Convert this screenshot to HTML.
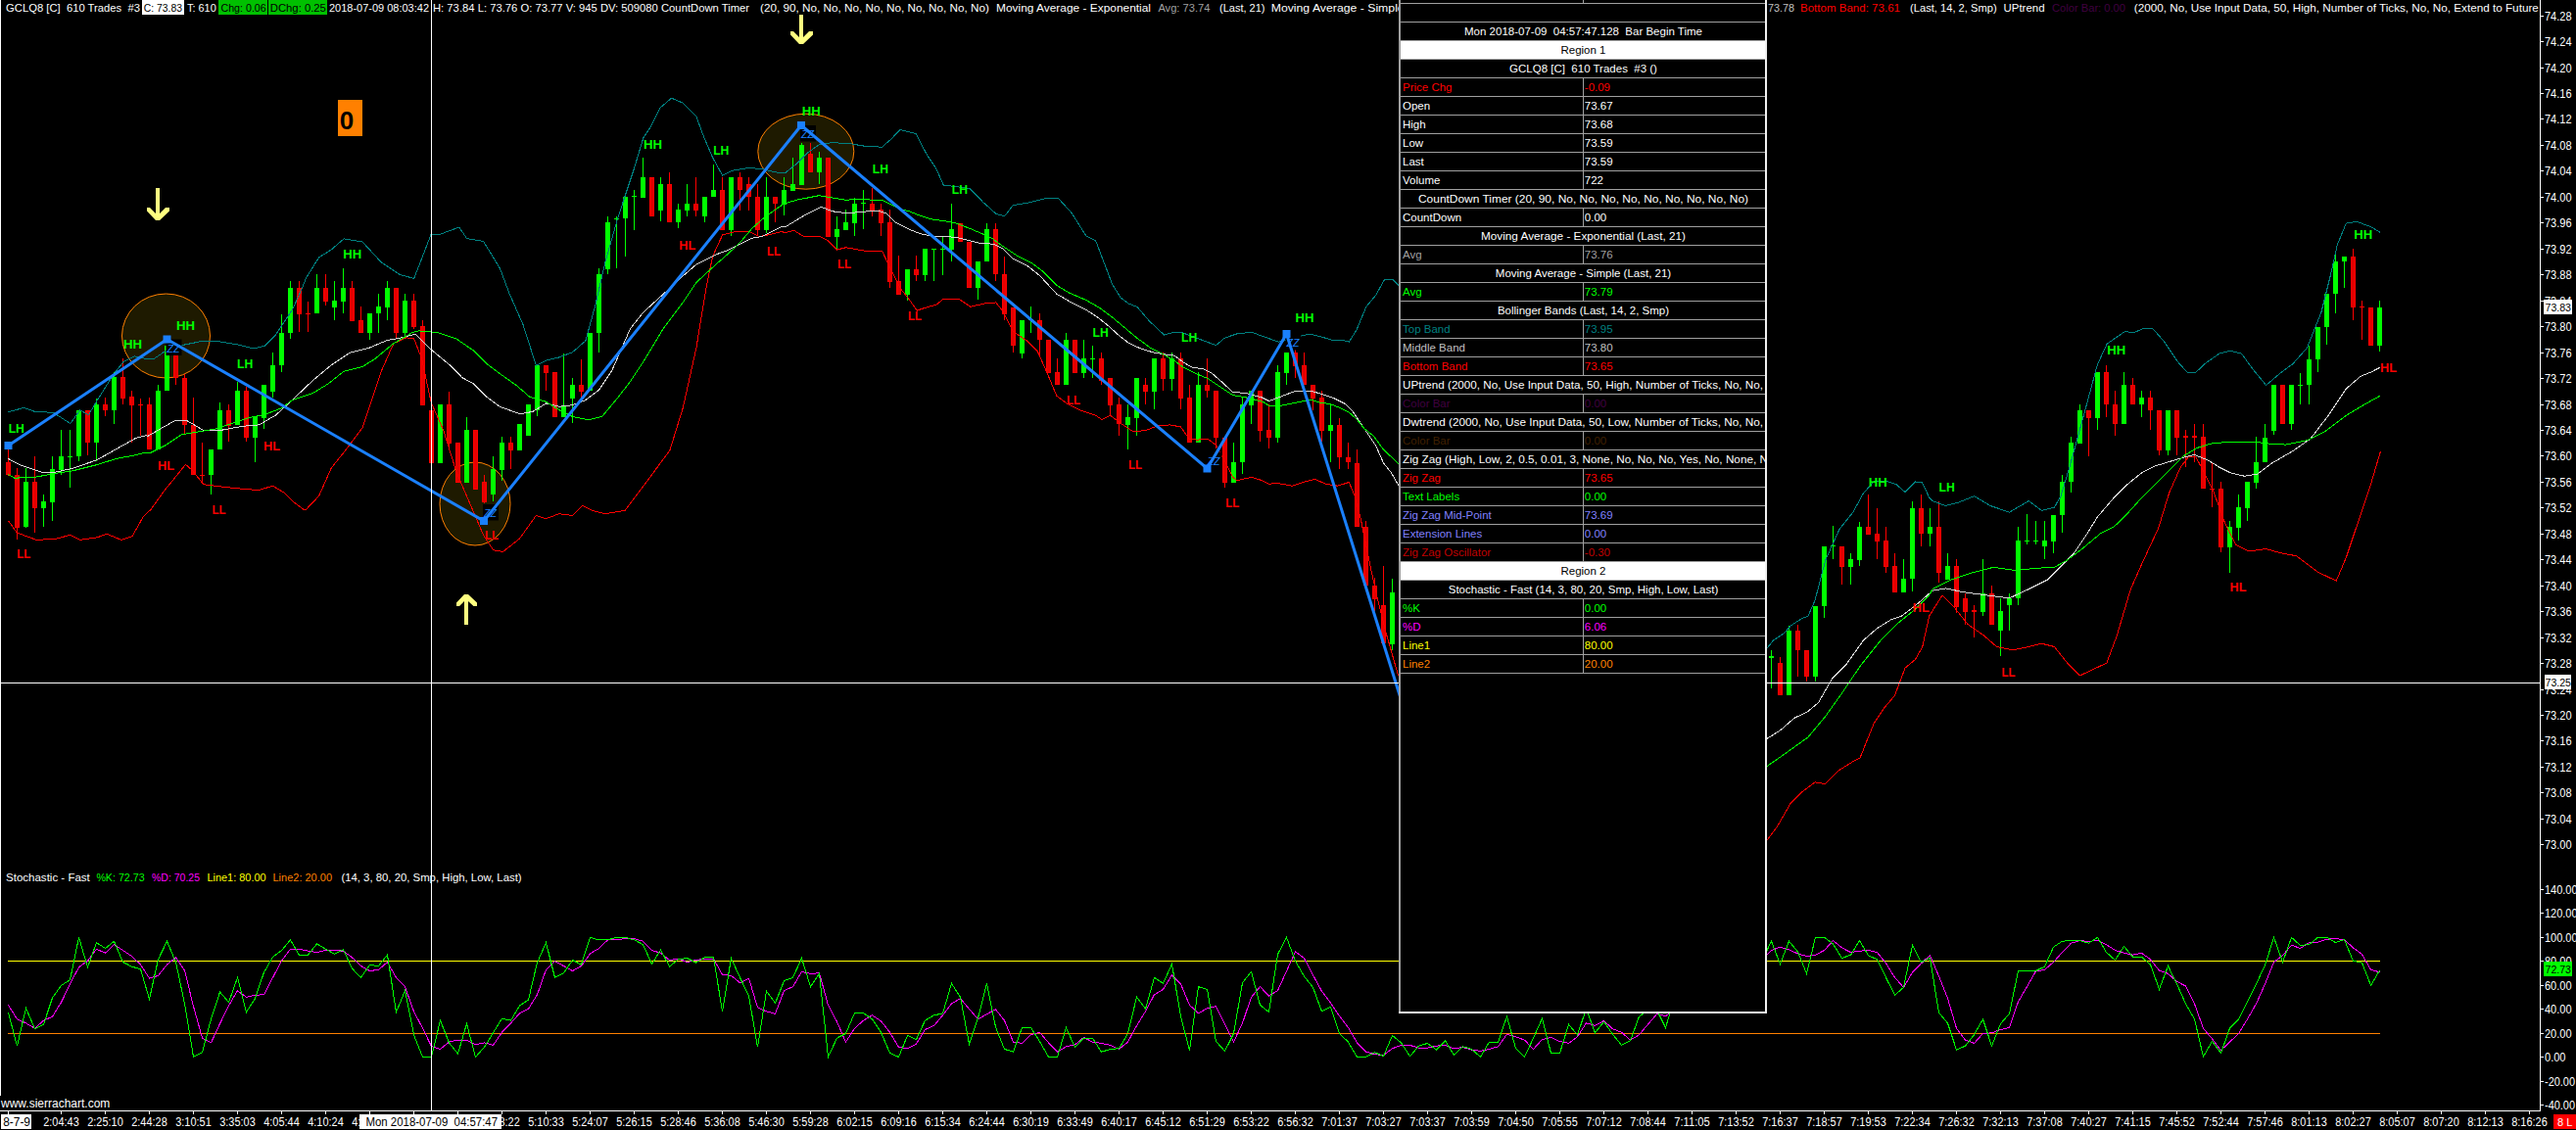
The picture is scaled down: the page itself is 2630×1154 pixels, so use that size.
<!DOCTYPE html><html><head><meta charset="utf-8"><style>html,body{margin:0;padding:0;background:#000;}body{width:2630px;height:1154px;overflow:hidden;position:relative}</style></head><body><svg width="2630" height="1154" viewBox="0 0 2630 1154" style="position:absolute;left:0;top:0">
<ellipse cx="169.5" cy="343" rx="45" ry="43" fill="#1e1a00" stroke="#ff8000" stroke-width="1"/>
<ellipse cx="485" cy="514.5" rx="36" ry="42.5" fill="#1e1a00" stroke="#ff8000" stroke-width="1"/>
<ellipse cx="822.8" cy="154.7" rx="49" ry="38.5" fill="#1e1a00" stroke="#ff8000" stroke-width="1"/>
<g shape-rendering="crispEdges"><rect x="8" y="459" width="1" height="27" fill="#ff0000"/><rect x="6" y="472" width="5" height="13" fill="#ff0000"/><rect x="7" y="473" width="3" height="11" fill="#e80000"/><rect x="17" y="478" width="1" height="73" fill="#ff0000"/><rect x="15" y="485" width="5" height="54" fill="#ff0000"/><rect x="16" y="486" width="3" height="52" fill="#e80000"/><rect x="26" y="478" width="1" height="61" fill="#00ff00"/><rect x="24" y="492" width="5" height="46" fill="#00ff00"/><rect x="35" y="466" width="1" height="78" fill="#ff0000"/><rect x="33" y="492" width="5" height="27" fill="#ff0000"/><rect x="34" y="493" width="3" height="25" fill="#e80000"/><rect x="44" y="505" width="1" height="33" fill="#00ff00"/><rect x="42" y="512" width="5" height="7" fill="#00ff00"/><rect x="53" y="466" width="1" height="66" fill="#00ff00"/><rect x="51" y="479" width="5" height="34" fill="#00ff00"/><rect x="62" y="439" width="1" height="46" fill="#00ff00"/><rect x="60" y="466" width="5" height="14" fill="#00ff00"/><rect x="71" y="439" width="1" height="59" fill="#00ff00"/><rect x="69" y="466" width="5" height="1" fill="#00ff00"/><rect x="80" y="419" width="1" height="52" fill="#00ff00"/><rect x="78" y="419" width="5" height="47" fill="#00ff00"/><rect x="89" y="419" width="1" height="46" fill="#ff0000"/><rect x="87" y="419" width="5" height="33" fill="#ff0000"/><rect x="88" y="420" width="3" height="31" fill="#e80000"/><rect x="98" y="407" width="1" height="64" fill="#00ff00"/><rect x="96" y="413" width="5" height="39" fill="#00ff00"/><rect x="107" y="406" width="1" height="19" fill="#ff0000"/><rect x="105" y="413" width="5" height="6" fill="#ff0000"/><rect x="106" y="414" width="3" height="4" fill="#e80000"/><rect x="116" y="380" width="1" height="53" fill="#00ff00"/><rect x="114" y="385" width="5" height="34" fill="#00ff00"/><rect x="125" y="366" width="1" height="47" fill="#ff0000"/><rect x="123" y="385" width="5" height="22" fill="#ff0000"/><rect x="124" y="386" width="3" height="20" fill="#e80000"/><rect x="134" y="399" width="1" height="53" fill="#ff0000"/><rect x="132" y="405" width="5" height="9" fill="#ff0000"/><rect x="133" y="406" width="3" height="7" fill="#e80000"/><rect x="143" y="407" width="1" height="38" fill="#ff0000"/><rect x="141" y="413" width="5" height="1" fill="#ff0000"/><rect x="152" y="406" width="1" height="53" fill="#ff0000"/><rect x="150" y="413" width="5" height="46" fill="#ff0000"/><rect x="151" y="414" width="3" height="44" fill="#e80000"/><rect x="161" y="393" width="1" height="66" fill="#00ff00"/><rect x="159" y="399" width="5" height="60" fill="#00ff00"/><rect x="170" y="353" width="1" height="46" fill="#00ff00"/><rect x="168" y="353" width="5" height="46" fill="#00ff00"/><rect x="179" y="359" width="1" height="34" fill="#ff0000"/><rect x="177" y="363" width="5" height="23" fill="#ff0000"/><rect x="178" y="364" width="3" height="21" fill="#e80000"/><rect x="188" y="382" width="1" height="62" fill="#ff0000"/><rect x="186" y="386" width="5" height="48" fill="#ff0000"/><rect x="187" y="387" width="3" height="46" fill="#e80000"/><rect x="197" y="406" width="1" height="79" fill="#ff0000"/><rect x="195" y="434" width="5" height="51" fill="#ff0000"/><rect x="196" y="435" width="3" height="49" fill="#e80000"/><rect x="206" y="452" width="1" height="40" fill="#ff0000"/><rect x="204" y="485" width="5" height="1" fill="#ff0000"/><rect x="215" y="459" width="1" height="46" fill="#00ff00"/><rect x="213" y="459" width="5" height="26" fill="#00ff00"/><rect x="224" y="411" width="1" height="48" fill="#00ff00"/><rect x="222" y="419" width="5" height="40" fill="#00ff00"/><rect x="233" y="413" width="1" height="38" fill="#ff0000"/><rect x="231" y="419" width="5" height="16" fill="#ff0000"/><rect x="232" y="420" width="3" height="14" fill="#e80000"/><rect x="242" y="390" width="1" height="44" fill="#00ff00"/><rect x="240" y="399" width="5" height="35" fill="#00ff00"/><rect x="251" y="395" width="1" height="56" fill="#ff0000"/><rect x="249" y="399" width="5" height="48" fill="#ff0000"/><rect x="250" y="400" width="3" height="46" fill="#e80000"/><rect x="260" y="425" width="1" height="47" fill="#00ff00"/><rect x="258" y="425" width="5" height="22" fill="#00ff00"/><rect x="269" y="393" width="1" height="45" fill="#00ff00"/><rect x="267" y="393" width="5" height="34" fill="#00ff00"/><rect x="278" y="360" width="1" height="46" fill="#00ff00"/><rect x="276" y="373" width="5" height="27" fill="#00ff00"/><rect x="287" y="321" width="1" height="59" fill="#00ff00"/><rect x="285" y="340" width="5" height="33" fill="#00ff00"/><rect x="296" y="287" width="1" height="59" fill="#00ff00"/><rect x="294" y="294" width="5" height="46" fill="#00ff00"/><rect x="305" y="287" width="1" height="52" fill="#ff0000"/><rect x="303" y="294" width="5" height="27" fill="#ff0000"/><rect x="304" y="295" width="3" height="25" fill="#e80000"/><rect x="314" y="308" width="1" height="31" fill="#ff0000"/><rect x="312" y="320" width="5" height="1" fill="#ff0000"/><rect x="323" y="280" width="1" height="40" fill="#00ff00"/><rect x="321" y="294" width="5" height="26" fill="#00ff00"/><rect x="332" y="280" width="1" height="32" fill="#ff0000"/><rect x="330" y="294" width="5" height="14" fill="#ff0000"/><rect x="331" y="295" width="3" height="12" fill="#e80000"/><rect x="341" y="287" width="1" height="40" fill="#00ff00"/><rect x="339" y="307" width="5" height="7" fill="#00ff00"/><rect x="350" y="274" width="1" height="46" fill="#00ff00"/><rect x="348" y="294" width="5" height="14" fill="#00ff00"/><rect x="359" y="287" width="1" height="41" fill="#ff0000"/><rect x="357" y="294" width="5" height="34" fill="#ff0000"/><rect x="358" y="295" width="3" height="32" fill="#e80000"/><rect x="368" y="313" width="1" height="27" fill="#ff0000"/><rect x="366" y="327" width="5" height="13" fill="#ff0000"/><rect x="367" y="328" width="3" height="11" fill="#e80000"/><rect x="377" y="320" width="1" height="27" fill="#00ff00"/><rect x="375" y="320" width="5" height="20" fill="#00ff00"/><rect x="386" y="300" width="1" height="40" fill="#00ff00"/><rect x="384" y="313" width="5" height="7" fill="#00ff00"/><rect x="395" y="287" width="1" height="40" fill="#00ff00"/><rect x="393" y="294" width="5" height="20" fill="#00ff00"/><rect x="404" y="294" width="1" height="52" fill="#ff0000"/><rect x="402" y="294" width="5" height="46" fill="#ff0000"/><rect x="403" y="295" width="3" height="44" fill="#e80000"/><rect x="413" y="300" width="1" height="46" fill="#00ff00"/><rect x="411" y="307" width="5" height="33" fill="#00ff00"/><rect x="422" y="300" width="1" height="36" fill="#ff0000"/><rect x="420" y="307" width="5" height="27" fill="#ff0000"/><rect x="421" y="308" width="3" height="25" fill="#e80000"/><rect x="431" y="327" width="1" height="87" fill="#ff0000"/><rect x="429" y="333" width="5" height="81" fill="#ff0000"/><rect x="430" y="334" width="3" height="79" fill="#e80000"/><rect x="440" y="419" width="1" height="54" fill="#ff0000"/><rect x="438" y="419" width="5" height="54" fill="#ff0000"/><rect x="439" y="420" width="3" height="52" fill="#e80000"/><rect x="449" y="413" width="1" height="60" fill="#00ff00"/><rect x="447" y="413" width="5" height="60" fill="#00ff00"/><rect x="458" y="400" width="1" height="58" fill="#ff0000"/><rect x="456" y="413" width="5" height="40" fill="#ff0000"/><rect x="457" y="414" width="3" height="38" fill="#e80000"/><rect x="467" y="452" width="1" height="41" fill="#ff0000"/><rect x="465" y="452" width="5" height="41" fill="#ff0000"/><rect x="466" y="453" width="3" height="39" fill="#e80000"/><rect x="476" y="426" width="1" height="67" fill="#00ff00"/><rect x="474" y="439" width="5" height="54" fill="#00ff00"/><rect x="485" y="439" width="1" height="61" fill="#ff0000"/><rect x="483" y="439" width="5" height="61" fill="#ff0000"/><rect x="484" y="440" width="3" height="59" fill="#e80000"/><rect x="494" y="485" width="1" height="29" fill="#ff0000"/><rect x="492" y="492" width="5" height="21" fill="#ff0000"/><rect x="493" y="493" width="3" height="19" fill="#e80000"/><rect x="503" y="466" width="1" height="46" fill="#00ff00"/><rect x="501" y="479" width="5" height="26" fill="#00ff00"/><rect x="512" y="446" width="1" height="45" fill="#00ff00"/><rect x="510" y="452" width="5" height="28" fill="#00ff00"/><rect x="521" y="446" width="1" height="33" fill="#ff0000"/><rect x="519" y="452" width="5" height="8" fill="#ff0000"/><rect x="520" y="453" width="3" height="6" fill="#e80000"/><rect x="530" y="433" width="1" height="27" fill="#00ff00"/><rect x="528" y="433" width="5" height="27" fill="#00ff00"/><rect x="539" y="413" width="1" height="32" fill="#00ff00"/><rect x="537" y="413" width="5" height="32" fill="#00ff00"/><rect x="548" y="373" width="1" height="52" fill="#00ff00"/><rect x="546" y="373" width="5" height="46" fill="#00ff00"/><rect x="557" y="373" width="1" height="26" fill="#ff0000"/><rect x="555" y="373" width="5" height="8" fill="#ff0000"/><rect x="556" y="374" width="3" height="6" fill="#e80000"/><rect x="566" y="380" width="1" height="46" fill="#ff0000"/><rect x="564" y="380" width="5" height="46" fill="#ff0000"/><rect x="565" y="381" width="3" height="44" fill="#e80000"/><rect x="575" y="361" width="1" height="65" fill="#00ff00"/><rect x="573" y="414" width="5" height="12" fill="#00ff00"/><rect x="584" y="386" width="1" height="46" fill="#00ff00"/><rect x="582" y="393" width="5" height="14" fill="#00ff00"/><rect x="593" y="367" width="1" height="40" fill="#ff0000"/><rect x="591" y="393" width="5" height="7" fill="#ff0000"/><rect x="592" y="394" width="3" height="5" fill="#e80000"/><rect x="602" y="340" width="1" height="59" fill="#00ff00"/><rect x="600" y="340" width="5" height="59" fill="#00ff00"/><rect x="611" y="274" width="1" height="86" fill="#00ff00"/><rect x="609" y="280" width="5" height="60" fill="#00ff00"/><rect x="620" y="221" width="1" height="59" fill="#00ff00"/><rect x="618" y="227" width="5" height="48" fill="#00ff00"/><rect x="629" y="221" width="1" height="53" fill="#00ff00"/><rect x="627" y="223" width="5" height="1" fill="#00ff00"/><rect x="638" y="199" width="1" height="63" fill="#00ff00"/><rect x="636" y="201" width="5" height="22" fill="#00ff00"/><rect x="647" y="194" width="1" height="41" fill="#00ff00"/><rect x="645" y="200" width="5" height="1" fill="#00ff00"/><rect x="656" y="161" width="1" height="41" fill="#00ff00"/><rect x="654" y="181" width="5" height="21" fill="#00ff00"/><rect x="665" y="181" width="1" height="40" fill="#ff0000"/><rect x="663" y="181" width="5" height="40" fill="#ff0000"/><rect x="664" y="182" width="3" height="38" fill="#e80000"/><rect x="674" y="181" width="1" height="45" fill="#00ff00"/><rect x="672" y="188" width="5" height="27" fill="#00ff00"/><rect x="683" y="176" width="1" height="51" fill="#ff0000"/><rect x="681" y="188" width="5" height="39" fill="#ff0000"/><rect x="682" y="189" width="3" height="37" fill="#e80000"/><rect x="692" y="208" width="1" height="25" fill="#00ff00"/><rect x="690" y="214" width="5" height="13" fill="#00ff00"/><rect x="701" y="188" width="1" height="33" fill="#00ff00"/><rect x="699" y="208" width="5" height="7" fill="#00ff00"/><rect x="710" y="181" width="1" height="40" fill="#ff0000"/><rect x="708" y="208" width="5" height="7" fill="#ff0000"/><rect x="709" y="209" width="3" height="5" fill="#e80000"/><rect x="719" y="201" width="1" height="26" fill="#00ff00"/><rect x="717" y="201" width="5" height="20" fill="#00ff00"/><rect x="728" y="168" width="1" height="33" fill="#00ff00"/><rect x="726" y="194" width="5" height="7" fill="#00ff00"/><rect x="737" y="181" width="1" height="54" fill="#ff0000"/><rect x="735" y="194" width="5" height="41" fill="#ff0000"/><rect x="736" y="195" width="3" height="39" fill="#e80000"/><rect x="746" y="181" width="1" height="60" fill="#00ff00"/><rect x="744" y="181" width="5" height="54" fill="#00ff00"/><rect x="755" y="176" width="1" height="39" fill="#ff0000"/><rect x="753" y="181" width="5" height="13" fill="#ff0000"/><rect x="754" y="182" width="3" height="11" fill="#e80000"/><rect x="764" y="181" width="1" height="34" fill="#ff0000"/><rect x="762" y="188" width="5" height="13" fill="#ff0000"/><rect x="763" y="189" width="3" height="11" fill="#e80000"/><rect x="773" y="188" width="1" height="53" fill="#ff0000"/><rect x="771" y="201" width="5" height="34" fill="#ff0000"/><rect x="772" y="202" width="3" height="32" fill="#e80000"/><rect x="782" y="181" width="1" height="57" fill="#00ff00"/><rect x="780" y="201" width="5" height="34" fill="#00ff00"/><rect x="791" y="201" width="1" height="26" fill="#ff0000"/><rect x="789" y="201" width="5" height="7" fill="#ff0000"/><rect x="790" y="202" width="3" height="5" fill="#e80000"/><rect x="800" y="181" width="1" height="39" fill="#00ff00"/><rect x="798" y="194" width="5" height="15" fill="#00ff00"/><rect x="809" y="161" width="1" height="34" fill="#00ff00"/><rect x="807" y="188" width="5" height="7" fill="#00ff00"/><rect x="818" y="146" width="1" height="43" fill="#00ff00"/><rect x="816" y="148" width="5" height="41" fill="#00ff00"/><rect x="827" y="146" width="1" height="30" fill="#ff0000"/><rect x="825" y="157" width="5" height="19" fill="#ff0000"/><rect x="826" y="158" width="3" height="17" fill="#e80000"/><rect x="836" y="155" width="1" height="33" fill="#00ff00"/><rect x="834" y="161" width="5" height="15" fill="#00ff00"/><rect x="845" y="161" width="1" height="81" fill="#ff0000"/><rect x="843" y="161" width="5" height="81" fill="#ff0000"/><rect x="844" y="162" width="3" height="79" fill="#e80000"/><rect x="854" y="221" width="1" height="33" fill="#00ff00"/><rect x="852" y="234" width="5" height="8" fill="#00ff00"/><rect x="863" y="214" width="1" height="21" fill="#00ff00"/><rect x="861" y="227" width="5" height="8" fill="#00ff00"/><rect x="872" y="202" width="1" height="39" fill="#00ff00"/><rect x="870" y="208" width="5" height="20" fill="#00ff00"/><rect x="881" y="194" width="1" height="40" fill="#00ff00"/><rect x="879" y="207" width="5" height="1" fill="#00ff00"/><rect x="890" y="192" width="1" height="29" fill="#ff0000"/><rect x="888" y="208" width="5" height="8" fill="#ff0000"/><rect x="889" y="209" width="3" height="6" fill="#e80000"/><rect x="899" y="208" width="1" height="33" fill="#ff0000"/><rect x="897" y="214" width="5" height="14" fill="#ff0000"/><rect x="898" y="215" width="3" height="12" fill="#e80000"/><rect x="908" y="214" width="1" height="80" fill="#ff0000"/><rect x="906" y="227" width="5" height="61" fill="#ff0000"/><rect x="907" y="228" width="3" height="59" fill="#e80000"/><rect x="917" y="261" width="1" height="40" fill="#ff0000"/><rect x="915" y="287" width="5" height="14" fill="#ff0000"/><rect x="916" y="288" width="3" height="12" fill="#e80000"/><rect x="926" y="275" width="1" height="32" fill="#00ff00"/><rect x="924" y="275" width="5" height="26" fill="#00ff00"/><rect x="935" y="261" width="1" height="26" fill="#ff0000"/><rect x="933" y="275" width="5" height="6" fill="#ff0000"/><rect x="934" y="276" width="3" height="4" fill="#e80000"/><rect x="944" y="254" width="1" height="33" fill="#00ff00"/><rect x="942" y="254" width="5" height="27" fill="#00ff00"/><rect x="953" y="254" width="1" height="33" fill="#00ff00"/><rect x="951" y="254" width="5" height="1" fill="#00ff00"/><rect x="962" y="241" width="1" height="40" fill="#00ff00"/><rect x="960" y="254" width="5" height="1" fill="#00ff00"/><rect x="971" y="208" width="1" height="59" fill="#00ff00"/><rect x="969" y="234" width="5" height="21" fill="#00ff00"/><rect x="980" y="228" width="1" height="19" fill="#ff0000"/><rect x="978" y="228" width="5" height="19" fill="#ff0000"/><rect x="979" y="229" width="3" height="17" fill="#e80000"/><rect x="989" y="247" width="1" height="47" fill="#ff0000"/><rect x="987" y="247" width="5" height="47" fill="#ff0000"/><rect x="988" y="248" width="3" height="45" fill="#e80000"/><rect x="998" y="267" width="1" height="39" fill="#00ff00"/><rect x="996" y="267" width="5" height="27" fill="#00ff00"/><rect x="1007" y="228" width="1" height="39" fill="#00ff00"/><rect x="1005" y="234" width="5" height="33" fill="#00ff00"/><rect x="1016" y="228" width="1" height="59" fill="#ff0000"/><rect x="1014" y="234" width="5" height="46" fill="#ff0000"/><rect x="1015" y="235" width="3" height="44" fill="#e80000"/><rect x="1025" y="262" width="1" height="65" fill="#ff0000"/><rect x="1023" y="280" width="5" height="41" fill="#ff0000"/><rect x="1024" y="281" width="3" height="39" fill="#e80000"/><rect x="1034" y="314" width="1" height="46" fill="#ff0000"/><rect x="1032" y="314" width="5" height="39" fill="#ff0000"/><rect x="1033" y="315" width="3" height="37" fill="#e80000"/><rect x="1043" y="327" width="1" height="39" fill="#00ff00"/><rect x="1041" y="327" width="5" height="34" fill="#00ff00"/><rect x="1052" y="313" width="1" height="27" fill="#00ff00"/><rect x="1050" y="326" width="5" height="1" fill="#00ff00"/><rect x="1061" y="320" width="1" height="45" fill="#ff0000"/><rect x="1059" y="327" width="5" height="20" fill="#ff0000"/><rect x="1060" y="328" width="3" height="18" fill="#e80000"/><rect x="1070" y="347" width="1" height="34" fill="#ff0000"/><rect x="1068" y="347" width="5" height="34" fill="#ff0000"/><rect x="1069" y="348" width="3" height="32" fill="#e80000"/><rect x="1079" y="366" width="1" height="27" fill="#ff0000"/><rect x="1077" y="380" width="5" height="13" fill="#ff0000"/><rect x="1078" y="381" width="3" height="11" fill="#e80000"/><rect x="1088" y="340" width="1" height="53" fill="#00ff00"/><rect x="1086" y="347" width="5" height="46" fill="#00ff00"/><rect x="1097" y="347" width="1" height="34" fill="#ff0000"/><rect x="1095" y="347" width="5" height="34" fill="#ff0000"/><rect x="1096" y="348" width="3" height="32" fill="#e80000"/><rect x="1106" y="347" width="1" height="39" fill="#00ff00"/><rect x="1104" y="366" width="5" height="15" fill="#00ff00"/><rect x="1115" y="353" width="1" height="33" fill="#00ff00"/><rect x="1113" y="366" width="5" height="1" fill="#00ff00"/><rect x="1124" y="360" width="1" height="33" fill="#ff0000"/><rect x="1122" y="366" width="5" height="23" fill="#ff0000"/><rect x="1123" y="367" width="3" height="21" fill="#e80000"/><rect x="1133" y="386" width="1" height="38" fill="#ff0000"/><rect x="1131" y="386" width="5" height="28" fill="#ff0000"/><rect x="1132" y="387" width="3" height="26" fill="#e80000"/><rect x="1142" y="406" width="1" height="39" fill="#ff0000"/><rect x="1140" y="413" width="5" height="20" fill="#ff0000"/><rect x="1141" y="414" width="3" height="18" fill="#e80000"/><rect x="1151" y="413" width="1" height="46" fill="#00ff00"/><rect x="1149" y="426" width="5" height="8" fill="#00ff00"/><rect x="1160" y="386" width="1" height="59" fill="#00ff00"/><rect x="1158" y="386" width="5" height="41" fill="#00ff00"/><rect x="1169" y="386" width="1" height="27" fill="#ff0000"/><rect x="1167" y="393" width="5" height="7" fill="#ff0000"/><rect x="1168" y="394" width="3" height="5" fill="#e80000"/><rect x="1178" y="366" width="1" height="52" fill="#00ff00"/><rect x="1176" y="366" width="5" height="34" fill="#00ff00"/><rect x="1187" y="360" width="1" height="39" fill="#ff0000"/><rect x="1185" y="366" width="5" height="21" fill="#ff0000"/><rect x="1186" y="367" width="3" height="19" fill="#e80000"/><rect x="1196" y="360" width="1" height="39" fill="#00ff00"/><rect x="1194" y="366" width="5" height="21" fill="#00ff00"/><rect x="1205" y="360" width="1" height="58" fill="#ff0000"/><rect x="1203" y="366" width="5" height="41" fill="#ff0000"/><rect x="1204" y="367" width="3" height="39" fill="#e80000"/><rect x="1214" y="393" width="1" height="59" fill="#ff0000"/><rect x="1212" y="406" width="5" height="46" fill="#ff0000"/><rect x="1213" y="407" width="3" height="44" fill="#e80000"/><rect x="1223" y="380" width="1" height="72" fill="#00ff00"/><rect x="1221" y="393" width="5" height="59" fill="#00ff00"/><rect x="1232" y="366" width="1" height="40" fill="#ff0000"/><rect x="1230" y="393" width="5" height="6" fill="#ff0000"/><rect x="1231" y="394" width="3" height="4" fill="#e80000"/><rect x="1241" y="399" width="1" height="59" fill="#ff0000"/><rect x="1239" y="399" width="5" height="48" fill="#ff0000"/><rect x="1240" y="400" width="3" height="46" fill="#e80000"/><rect x="1250" y="447" width="1" height="51" fill="#ff0000"/><rect x="1248" y="447" width="5" height="46" fill="#ff0000"/><rect x="1249" y="448" width="3" height="44" fill="#e80000"/><rect x="1259" y="452" width="1" height="41" fill="#00ff00"/><rect x="1257" y="472" width="5" height="21" fill="#00ff00"/><rect x="1268" y="406" width="1" height="78" fill="#00ff00"/><rect x="1266" y="413" width="5" height="59" fill="#00ff00"/><rect x="1277" y="399" width="1" height="34" fill="#00ff00"/><rect x="1275" y="399" width="5" height="15" fill="#00ff00"/><rect x="1286" y="399" width="1" height="52" fill="#ff0000"/><rect x="1284" y="399" width="5" height="41" fill="#ff0000"/><rect x="1285" y="400" width="3" height="39" fill="#e80000"/><rect x="1295" y="413" width="1" height="45" fill="#ff0000"/><rect x="1293" y="439" width="5" height="8" fill="#ff0000"/><rect x="1294" y="440" width="3" height="6" fill="#e80000"/><rect x="1304" y="373" width="1" height="79" fill="#00ff00"/><rect x="1302" y="380" width="5" height="67" fill="#00ff00"/><rect x="1313" y="360" width="1" height="33" fill="#00ff00"/><rect x="1311" y="360" width="5" height="21" fill="#00ff00"/><rect x="1322" y="357" width="1" height="29" fill="#ff0000"/><rect x="1320" y="360" width="5" height="14" fill="#ff0000"/><rect x="1321" y="361" width="3" height="12" fill="#e80000"/><rect x="1331" y="360" width="1" height="33" fill="#ff0000"/><rect x="1329" y="373" width="5" height="20" fill="#ff0000"/><rect x="1330" y="374" width="3" height="18" fill="#e80000"/><rect x="1340" y="393" width="1" height="26" fill="#ff0000"/><rect x="1338" y="393" width="5" height="14" fill="#ff0000"/><rect x="1339" y="394" width="3" height="12" fill="#e80000"/><rect x="1349" y="399" width="1" height="52" fill="#ff0000"/><rect x="1347" y="406" width="5" height="34" fill="#ff0000"/><rect x="1348" y="407" width="3" height="32" fill="#e80000"/><rect x="1358" y="412" width="1" height="60" fill="#00ff00"/><rect x="1356" y="434" width="5" height="6" fill="#00ff00"/><rect x="1367" y="427" width="1" height="52" fill="#ff0000"/><rect x="1365" y="434" width="5" height="33" fill="#ff0000"/><rect x="1366" y="435" width="3" height="31" fill="#e80000"/><rect x="1376" y="452" width="1" height="27" fill="#ff0000"/><rect x="1374" y="467" width="5" height="5" fill="#ff0000"/><rect x="1375" y="468" width="3" height="3" fill="#e80000"/><rect x="1385" y="459" width="1" height="79" fill="#ff0000"/><rect x="1383" y="473" width="5" height="65" fill="#ff0000"/><rect x="1384" y="474" width="3" height="63" fill="#e80000"/><rect x="1394" y="532" width="1" height="66" fill="#ff0000"/><rect x="1392" y="538" width="5" height="60" fill="#ff0000"/><rect x="1393" y="539" width="3" height="58" fill="#e80000"/><rect x="1403" y="590" width="1" height="34" fill="#ff0000"/><rect x="1401" y="598" width="5" height="14" fill="#ff0000"/><rect x="1402" y="599" width="3" height="12" fill="#e80000"/><rect x="1412" y="578" width="1" height="79" fill="#ff0000"/><rect x="1410" y="618" width="5" height="39" fill="#ff0000"/><rect x="1411" y="619" width="3" height="37" fill="#e80000"/><rect x="1421" y="591" width="1" height="73" fill="#00ff00"/><rect x="1419" y="605" width="5" height="53" fill="#00ff00"/><rect x="1808" y="664" width="1" height="39" fill="#00ff00"/><rect x="1806" y="670" width="5" height="2" fill="#00ff00"/><rect x="1817" y="671" width="1" height="39" fill="#ff0000"/><rect x="1815" y="677" width="5" height="33" fill="#ff0000"/><rect x="1816" y="678" width="3" height="31" fill="#e80000"/><rect x="1826" y="639" width="1" height="71" fill="#00ff00"/><rect x="1824" y="644" width="5" height="66" fill="#00ff00"/><rect x="1835" y="638" width="1" height="53" fill="#ff0000"/><rect x="1833" y="644" width="5" height="20" fill="#ff0000"/><rect x="1834" y="645" width="3" height="18" fill="#e80000"/><rect x="1844" y="664" width="1" height="32" fill="#ff0000"/><rect x="1842" y="664" width="5" height="27" fill="#ff0000"/><rect x="1843" y="665" width="3" height="25" fill="#e80000"/><rect x="1853" y="619" width="1" height="77" fill="#00ff00"/><rect x="1851" y="619" width="5" height="72" fill="#00ff00"/><rect x="1862" y="558" width="1" height="73" fill="#00ff00"/><rect x="1860" y="558" width="5" height="61" fill="#00ff00"/><rect x="1871" y="537" width="1" height="34" fill="#00ff00"/><rect x="1869" y="557" width="5" height="1" fill="#00ff00"/><rect x="1880" y="558" width="1" height="39" fill="#ff0000"/><rect x="1878" y="558" width="5" height="21" fill="#ff0000"/><rect x="1879" y="559" width="3" height="19" fill="#e80000"/><rect x="1889" y="565" width="1" height="32" fill="#00ff00"/><rect x="1887" y="571" width="5" height="8" fill="#00ff00"/><rect x="1898" y="533" width="1" height="45" fill="#00ff00"/><rect x="1896" y="538" width="5" height="34" fill="#00ff00"/><rect x="1907" y="505" width="1" height="41" fill="#ff0000"/><rect x="1905" y="538" width="5" height="8" fill="#ff0000"/><rect x="1906" y="539" width="3" height="6" fill="#e80000"/><rect x="1916" y="519" width="1" height="52" fill="#ff0000"/><rect x="1914" y="545" width="5" height="8" fill="#ff0000"/><rect x="1915" y="546" width="3" height="6" fill="#e80000"/><rect x="1925" y="538" width="1" height="47" fill="#ff0000"/><rect x="1923" y="552" width="5" height="27" fill="#ff0000"/><rect x="1924" y="553" width="3" height="25" fill="#e80000"/><rect x="1934" y="565" width="1" height="40" fill="#ff0000"/><rect x="1932" y="578" width="5" height="27" fill="#ff0000"/><rect x="1933" y="579" width="3" height="25" fill="#e80000"/><rect x="1943" y="571" width="1" height="34" fill="#00ff00"/><rect x="1941" y="591" width="5" height="14" fill="#00ff00"/><rect x="1952" y="512" width="1" height="92" fill="#00ff00"/><rect x="1950" y="519" width="5" height="72" fill="#00ff00"/><rect x="1961" y="505" width="1" height="53" fill="#ff0000"/><rect x="1959" y="519" width="5" height="26" fill="#ff0000"/><rect x="1960" y="520" width="3" height="24" fill="#e80000"/><rect x="1970" y="519" width="1" height="39" fill="#00ff00"/><rect x="1968" y="538" width="5" height="7" fill="#00ff00"/><rect x="1979" y="512" width="1" height="83" fill="#ff0000"/><rect x="1977" y="538" width="5" height="47" fill="#ff0000"/><rect x="1978" y="539" width="3" height="45" fill="#e80000"/><rect x="1988" y="565" width="1" height="27" fill="#00ff00"/><rect x="1986" y="578" width="5" height="14" fill="#00ff00"/><rect x="1997" y="571" width="1" height="55" fill="#ff0000"/><rect x="1995" y="578" width="5" height="42" fill="#ff0000"/><rect x="1996" y="579" width="3" height="40" fill="#e80000"/><rect x="2006" y="606" width="1" height="32" fill="#ff0000"/><rect x="2004" y="611" width="5" height="14" fill="#ff0000"/><rect x="2005" y="612" width="3" height="12" fill="#e80000"/><rect x="2015" y="618" width="1" height="33" fill="#ff0000"/><rect x="2013" y="623" width="5" height="2" fill="#ff0000"/><rect x="2024" y="571" width="1" height="58" fill="#00ff00"/><rect x="2022" y="606" width="5" height="19" fill="#00ff00"/><rect x="2033" y="598" width="1" height="40" fill="#ff0000"/><rect x="2031" y="606" width="5" height="32" fill="#ff0000"/><rect x="2032" y="607" width="3" height="30" fill="#e80000"/><rect x="2042" y="611" width="1" height="59" fill="#00ff00"/><rect x="2040" y="624" width="5" height="20" fill="#00ff00"/><rect x="2051" y="606" width="1" height="38" fill="#00ff00"/><rect x="2049" y="611" width="5" height="7" fill="#00ff00"/><rect x="2060" y="538" width="1" height="80" fill="#00ff00"/><rect x="2058" y="552" width="5" height="59" fill="#00ff00"/><rect x="2069" y="525" width="1" height="31" fill="#00ff00"/><rect x="2067" y="552" width="5" height="1" fill="#00ff00"/><rect x="2078" y="532" width="1" height="24" fill="#00ff00"/><rect x="2076" y="552" width="5" height="1" fill="#00ff00"/><rect x="2087" y="532" width="1" height="39" fill="#00ff00"/><rect x="2085" y="552" width="5" height="6" fill="#00ff00"/><rect x="2096" y="526" width="1" height="39" fill="#00ff00"/><rect x="2094" y="526" width="5" height="27" fill="#00ff00"/><rect x="2105" y="485" width="1" height="59" fill="#00ff00"/><rect x="2103" y="492" width="5" height="34" fill="#00ff00"/><rect x="2114" y="446" width="1" height="57" fill="#00ff00"/><rect x="2112" y="452" width="5" height="40" fill="#00ff00"/><rect x="2123" y="413" width="1" height="40" fill="#00ff00"/><rect x="2121" y="419" width="5" height="34" fill="#00ff00"/><rect x="2132" y="419" width="1" height="47" fill="#ff0000"/><rect x="2130" y="419" width="5" height="8" fill="#ff0000"/><rect x="2131" y="420" width="3" height="6" fill="#e80000"/><rect x="2141" y="380" width="1" height="59" fill="#00ff00"/><rect x="2139" y="380" width="5" height="47" fill="#00ff00"/><rect x="2150" y="373" width="1" height="53" fill="#ff0000"/><rect x="2148" y="380" width="5" height="33" fill="#ff0000"/><rect x="2149" y="381" width="3" height="31" fill="#e80000"/><rect x="2159" y="399" width="1" height="46" fill="#ff0000"/><rect x="2157" y="413" width="5" height="20" fill="#ff0000"/><rect x="2158" y="414" width="3" height="18" fill="#e80000"/><rect x="2168" y="380" width="1" height="53" fill="#00ff00"/><rect x="2166" y="393" width="5" height="40" fill="#00ff00"/><rect x="2177" y="386" width="1" height="27" fill="#ff0000"/><rect x="2175" y="393" width="5" height="20" fill="#ff0000"/><rect x="2176" y="394" width="3" height="18" fill="#e80000"/><rect x="2186" y="399" width="1" height="27" fill="#00ff00"/><rect x="2184" y="406" width="5" height="7" fill="#00ff00"/><rect x="2195" y="399" width="1" height="40" fill="#ff0000"/><rect x="2193" y="406" width="5" height="13" fill="#ff0000"/><rect x="2194" y="407" width="3" height="11" fill="#e80000"/><rect x="2204" y="419" width="1" height="46" fill="#ff0000"/><rect x="2202" y="419" width="5" height="41" fill="#ff0000"/><rect x="2203" y="420" width="3" height="39" fill="#e80000"/><rect x="2213" y="419" width="1" height="46" fill="#00ff00"/><rect x="2211" y="419" width="5" height="41" fill="#00ff00"/><rect x="2222" y="419" width="1" height="46" fill="#ff0000"/><rect x="2220" y="419" width="5" height="28" fill="#ff0000"/><rect x="2221" y="420" width="3" height="26" fill="#e80000"/><rect x="2231" y="439" width="1" height="38" fill="#ff0000"/><rect x="2229" y="445" width="5" height="2" fill="#ff0000"/><rect x="2240" y="433" width="1" height="39" fill="#ff0000"/><rect x="2238" y="445" width="5" height="2" fill="#ff0000"/><rect x="2249" y="433" width="1" height="66" fill="#ff0000"/><rect x="2247" y="446" width="5" height="53" fill="#ff0000"/><rect x="2248" y="447" width="3" height="51" fill="#e80000"/><rect x="2258" y="472" width="1" height="46" fill="#ff0000"/><rect x="2256" y="499" width="5" height="1" fill="#ff0000"/><rect x="2267" y="492" width="1" height="72" fill="#ff0000"/><rect x="2265" y="499" width="5" height="60" fill="#ff0000"/><rect x="2266" y="500" width="3" height="58" fill="#e80000"/><rect x="2276" y="532" width="1" height="53" fill="#00ff00"/><rect x="2274" y="538" width="5" height="21" fill="#00ff00"/><rect x="2285" y="505" width="1" height="47" fill="#00ff00"/><rect x="2283" y="518" width="5" height="21" fill="#00ff00"/><rect x="2294" y="492" width="1" height="40" fill="#00ff00"/><rect x="2292" y="492" width="5" height="27" fill="#00ff00"/><rect x="2303" y="446" width="1" height="53" fill="#00ff00"/><rect x="2301" y="472" width="5" height="21" fill="#00ff00"/><rect x="2312" y="433" width="1" height="39" fill="#00ff00"/><rect x="2310" y="447" width="5" height="25" fill="#00ff00"/><rect x="2321" y="393" width="1" height="51" fill="#00ff00"/><rect x="2319" y="393" width="5" height="47" fill="#00ff00"/><rect x="2330" y="393" width="1" height="40" fill="#ff0000"/><rect x="2328" y="393" width="5" height="40" fill="#ff0000"/><rect x="2329" y="394" width="3" height="38" fill="#e80000"/><rect x="2339" y="393" width="1" height="46" fill="#00ff00"/><rect x="2337" y="393" width="5" height="40" fill="#00ff00"/><rect x="2348" y="381" width="1" height="32" fill="#00ff00"/><rect x="2346" y="393" width="5" height="1" fill="#00ff00"/><rect x="2357" y="353" width="1" height="60" fill="#00ff00"/><rect x="2355" y="367" width="5" height="26" fill="#00ff00"/><rect x="2366" y="334" width="1" height="46" fill="#00ff00"/><rect x="2364" y="334" width="5" height="33" fill="#00ff00"/><rect x="2375" y="300" width="1" height="52" fill="#00ff00"/><rect x="2373" y="300" width="5" height="34" fill="#00ff00"/><rect x="2384" y="256" width="1" height="64" fill="#00ff00"/><rect x="2382" y="267" width="5" height="33" fill="#00ff00"/><rect x="2393" y="262" width="1" height="32" fill="#00ff00"/><rect x="2391" y="262" width="5" height="5" fill="#00ff00"/><rect x="2402" y="254" width="1" height="73" fill="#ff0000"/><rect x="2400" y="262" width="5" height="52" fill="#ff0000"/><rect x="2401" y="263" width="3" height="50" fill="#e80000"/><rect x="2411" y="307" width="1" height="40" fill="#ff0000"/><rect x="2409" y="313" width="5" height="1" fill="#ff0000"/><rect x="2420" y="314" width="1" height="39" fill="#ff0000"/><rect x="2418" y="314" width="5" height="39" fill="#ff0000"/><rect x="2419" y="315" width="3" height="37" fill="#e80000"/><rect x="2429" y="307" width="1" height="52" fill="#00ff00"/><rect x="2427" y="314" width="5" height="39" fill="#00ff00"/></g>
<polyline points="8.4,531.6 17.3,544.0 37.2,551.4 57.0,550.2 71.8,546.4 81.7,551.4 99.1,548.9 109.0,545.2 123.8,551.4 135.0,547.7 146.1,527.9 154.2,520.2 168.3,500.4 189.5,474.4 196.6,480.6 207.9,494.7 230.6,497.6 253.2,499.8 264.5,500.4 278.7,496.2 290.0,503.2 298.5,511.7 309.8,520.2 312.7,520.1 325.5,506.7 338.2,478.0 351.0,462.1 370.1,436.6 379.6,408.0 389.2,379.3 401.9,350.6 414.7,344.9 422.7,345.8 430.6,366.5 440.2,411.1 452.9,439.8 465.7,481.2 483.5,523.0 493.6,546.6 503.6,561.7 513.7,563.4 530.6,549.9 547.4,526.4 557.5,529.7 570.9,524.7 584.4,526.4 594.5,516.3 604.6,521.3 618.0,524.7 638.2,521.3 683.8,460.2 697.3,416.5 710.8,355.9 720.8,295.3 727.6,261.7 737.7,239.8 751.1,236.5 764.6,236.5 774.7,241.5 784.8,239.8 798.2,236.5 801.5,237.7 810.7,235.4 819.9,241.1 836.0,241.1 845.2,245.7 854.5,255.0 863.7,252.7 882.1,256.1 900.5,256.1 909.7,275.7 918.9,294.1 928.1,305.6 936.2,317.1 946.5,313.7 955.7,311.4 962.4,305.9 979.8,305.9 990.9,313.3 1004.5,310.1 1016.9,308.9 1024.4,318.8 1034.3,338.6 1049.2,348.5 1059.1,358.4 1069.0,380.8 1078.9,404.3 1088.9,411.8 1103.7,419.2 1118.6,424.2 1124.9,428.4 1133.3,424.2 1144.0,432.2 1156.7,440.7 1169.4,439.6 1182.2,434.8 1194.9,433.9 1205.5,436.0 1214.0,448.1 1222.5,449.2 1233.1,448.1 1241.6,454.5 1250.1,470.4 1258.6,487.4 1262.8,490.6 1277.7,487.4 1287.8,490.4 1295.6,494.3 1303.4,493.3 1319.0,496.2 1330.7,492.4 1342.3,489.4 1354.0,494.3 1365.7,496.2 1377.4,492.4 1383.1,506.5 1389.5,531.0 1398.0,573.4 1406.4,611.7 1414.9,645.6 1423.4,675.4 1427.7,690.2" fill="none" stroke="#ff0000" stroke-width="1" shape-rendering="crispEdges"/>
<polyline points="1803.5,859.0 1814.1,844.8 1828.3,820.1 1838.9,809.5 1853.0,798.9 1863.6,800.6 1877.8,786.5 1891.9,777.6 1899.0,774.1 1913.2,738.7 1923.8,722.8 1934.4,710.5 1945.0,682.2 1955.6,673.3 1962.7,660.9 1969.7,629.1 1982.9,608.1 1996.0,621.2 2009.1,637.6 2025.4,649.0 2038.5,660.5 2054.9,663.8 2071.3,660.5 2084.3,657.2 2097.4,660.5 2110.5,676.9 2123.6,689.9 2150.9,677.0 2161.1,649.8 2175.3,601.7 2186.6,576.2 2203.6,539.5 2214.9,502.7 2226.2,477.2 2234.7,466.4 2241.8,466.4 2248.9,480.0 2260.2,502.7 2271.5,533.8 2282.8,556.4 2294.2,562.1 2300.9,562.3 2313.6,560.5 2326.3,564.2 2344.5,567.8 2366.3,584.1 2385.2,593.2 2395.3,569.6 2409.9,526.0 2420.8,493.3 2430.6,460.6" fill="none" stroke="#ff0000" stroke-width="1" shape-rendering="crispEdges"/>
<polyline points="8.4,420.6 24.8,416.4 34.7,420.1 54.5,421.4 71.8,432.5 81.7,418.9 90.4,423.8 99.1,409.0 116.4,381.7 126.3,369.3 137.5,363.9 148.6,366.4 157.0,366.5 168.3,358.9 182.5,353.2 196.6,350.4 207.9,348.1 224.9,349.0 241.9,351.8 258.9,356.0 270.2,353.2 281.5,341.9 298.5,316.4 309.8,290.9 312.7,283.7 325.5,263.0 338.2,255.0 351.0,243.9 370.1,247.1 389.2,267.8 408.3,280.5 422.7,284.4 440.2,239.1 449.7,239.1 468.8,232.1 476.7,243.7 493.6,246.4 510.4,274.0 520.5,300.9 533.9,331.2 547.4,373.3 557.5,368.2 570.9,364.9 584.4,359.8 597.9,348.0 608.0,311.0 618.0,267.3 631.5,220.2 638.2,200.0 646.8,174.2 656.9,140.6 663.6,130.5 673.7,110.3 685.5,100.2 697.3,105.2 710.8,118.7 717.5,137.2 727.6,160.8 737.7,179.3 747.8,174.2 764.6,171.5 778.0,172.5 791.5,175.9 801.5,176.7 813.0,167.5 824.5,156.0 836.0,147.9 849.9,145.6 868.3,146.8 882.1,149.1 900.5,150.2 909.7,142.2 918.9,132.5 935.0,136.4 946.5,158.3 955.7,172.1 963.6,189.8 969.8,189.8 989.7,192.3 1004.5,207.2 1016.9,218.4 1025.6,220.8 1034.3,209.7 1049.2,207.2 1069.0,202.2 1080.2,202.2 1093.8,217.1 1108.7,240.7 1118.6,245.6 1135.5,290.0 1144.0,303.8 1152.5,310.2 1160.9,313.3 1173.7,328.2 1188.5,342.0 1199.2,339.2 1207.6,339.9 1224.6,346.3 1241.6,352.6 1250.1,345.2 1262.8,340.9 1277.7,339.2 1291.7,344.3 1305.3,349.2 1315.1,347.2 1330.7,342.3 1338.4,341.4 1350.1,344.3 1359.9,347.2 1369.6,347.2 1377.4,349.2 1385.2,336.5 1394.9,313.1 1404.7,301.4 1413.5,285.5 1422.2,285.5 1428.1,291.7" fill="none" stroke="#008080" stroke-width="1" shape-rendering="crispEdges"/>
<polyline points="1803.5,662.7 1810.6,653.9 1821.2,646.8 1828.3,639.0 1838.9,632.0 1846.0,629.1 1853.0,613.2 1863.6,572.5 1877.8,540.7 1891.9,523.0 1902.5,503.6 1913.2,491.9 1927.3,491.9 1936.1,494.8 1945.0,502.5 1955.6,491.9 1962.7,493.0 1969.7,508.2 1973.1,511.6 1986.2,516.5 1999.3,513.2 2015.6,506.7 2032.0,516.5 2051.6,523.1 2071.3,511.6 2084.3,521.4 2097.4,518.2 2104.0,506.7 2113.8,474.0 2123.6,438.0 2133.4,402.0 2141.3,372.5 2151.2,351.2 2161.1,344.2 2169.6,338.5 2178.1,339.9 2189.4,335.1 2197.9,335.7 2209.3,348.4 2223.4,369.6 2233.3,380.4 2241.8,380.4 2251.7,371.0 2265.9,361.1 2277.2,358.3 2288.5,361.1 2299.8,376.7 2313.6,393.4 2326.3,382.5 2340.9,371.6 2355.4,355.3 2369.9,319.0 2379.0,282.6 2386.3,250.0 2395.3,228.2 2406.2,226.3 2420.8,231.8 2429.8,237.2" fill="none" stroke="#008080" stroke-width="1" shape-rendering="crispEdges"/>
<polyline points="8.4,468.4 19.8,474.6 44.6,482.8 57.0,482.0 74.3,478.3 99.1,469.7 118.9,458.5 138.7,447.4 148.6,444.9 151.3,445.2 168.3,435.3 179.6,429.1 190.9,429.6 207.9,439.5 224.9,439.5 247.6,435.3 264.5,433.9 281.5,424.0 298.5,408.4 319.1,388.8 338.2,372.9 357.3,360.2 376.5,355.4 395.6,347.4 408.3,345.2 424.2,341.1 440.2,357.0 459.3,372.9 472.0,385.7 483.5,391.8 496.9,405.2 510.4,415.3 530.6,422.7 544.0,420.4 557.5,412.0 570.9,415.3 584.4,413.7 597.9,408.6 611.3,398.5 624.8,378.3 643.5,335.7 656.9,318.9 677.1,300.4 697.3,281.9 710.8,270.1 730.9,260.0 744.4,255.0 757.9,248.2 768.0,243.2 778.0,241.5 798.2,231.4 801.5,231.9 813.0,225.0 824.5,218.1 838.3,211.2 849.9,215.8 859.1,217.0 872.9,217.0 886.7,215.8 898.2,215.8 905.1,218.1 914.3,227.3 928.1,234.2 939.6,238.8 951.1,241.1 969.8,241.9 979.8,243.1 989.7,245.6 999.6,248.1 1014.5,249.3 1024.4,254.3 1034.3,264.2 1049.2,271.7 1061.6,281.6 1078.9,300.2 1093.8,308.9 1108.7,316.3 1120.6,324.0 1131.2,332.5 1141.8,342.0 1152.5,350.5 1165.2,356.2 1177.9,360.0 1190.7,362.2 1199.2,363.2 1207.6,369.6 1216.1,374.9 1228.9,377.0 1237.4,381.3 1245.9,388.7 1258.6,400.4 1271.3,401.4 1279.8,403.6 1287.8,405.7 1295.6,409.6 1303.4,406.6 1311.2,403.7 1322.9,399.2 1338.4,399.2 1350.1,402.7 1361.8,406.6 1373.5,412.5 1381.3,420.3 1389.1,432.0 1396.9,443.6 1404.7,455.3 1412.5,472.9 1420.3,482.6 1428.1,496.2" fill="none" stroke="#d8d8d8" stroke-width="1" shape-rendering="crispEdges"/>
<polyline points="1803.5,754.7 1817.7,745.8 1831.8,733.4 1846.0,726.4 1856.6,717.5 1870.7,692.8 1884.9,678.6 1902.5,653.9 1916.7,641.5 1930.8,632.7 1941.4,629.1 1955.6,618.5 1969.7,606.1 1973.1,603.2 1986.2,600.9 2005.8,604.9 2025.4,607.5 2051.6,610.8 2071.3,601.6 2090.9,591.8 2104.0,578.7 2117.1,565.6 2130.2,546.0 2141.3,528.1 2158.3,508.3 2172.5,494.2 2186.6,482.8 2200.8,475.8 2214.9,471.5 2229.1,467.3 2240.4,464.4 2254.5,470.1 2265.9,477.2 2277.2,482.8 2291.3,486.2 2304.5,484.2 2319.1,473.3 2340.9,460.6 2359.0,447.9 2377.2,424.3 2395.3,397.1 2409.9,384.4 2420.8,380.0 2429.8,375.3" fill="none" stroke="#d8d8d8" stroke-width="1" shape-rendering="crispEdges"/>
<polyline points="8.4,484.5 14.9,488.2 37.2,487.0 57.0,483.3 74.3,480.8 99.1,474.6 118.9,468.4 138.7,464.7 148.6,462.2 154.2,462.2 168.3,455.1 185.3,443.8 202.3,441.0 219.3,438.1 236.2,432.5 253.2,426.8 270.2,423.4 287.2,416.9 298.5,408.4 319.1,401.6 335.0,392.0 351.0,379.3 370.1,374.5 382.8,366.5 401.9,350.6 421.1,339.5 427.4,337.9 446.5,339.5 465.7,345.8 483.5,358.1 496.9,371.6 510.4,381.7 527.2,393.5 540.7,405.2 557.5,410.3 570.9,418.7 584.4,425.4 601.2,428.8 614.7,425.4 631.5,405.2 643.5,389.6 656.9,369.4 677.1,335.7 697.3,308.8 710.8,288.6 730.9,270.1 744.4,258.3 757.9,244.9 768.0,233.1 781.4,221.3 798.2,209.5 801.5,207.8 813.0,204.3 824.5,202.0 836.0,199.7 849.9,202.0 863.7,204.3 877.5,203.2 891.3,204.3 900.5,204.3 909.7,208.9 918.9,213.5 928.1,215.8 939.6,220.4 951.1,223.9 964.9,225.8 974.8,227.5 989.7,233.2 1004.5,239.4 1014.5,244.4 1024.4,251.8 1039.3,261.7 1054.1,269.2 1064.1,276.6 1078.9,291.5 1091.3,298.9 1108.7,306.4 1122.7,314.4 1135.5,324.0 1148.2,334.6 1160.9,345.2 1173.7,354.7 1186.4,361.1 1199.2,368.5 1207.6,374.9 1220.4,381.3 1233.1,386.6 1245.9,395.1 1258.6,403.6 1271.3,405.7 1279.8,407.8 1289.7,410.5 1295.6,414.4 1307.3,414.4 1319.0,412.1 1330.7,409.6 1338.4,408.2 1346.2,410.9 1357.9,412.5 1367.7,416.4 1377.4,421.2 1385.2,428.1 1393.0,437.8 1402.7,445.6 1412.5,459.2 1428.1,473.8" fill="none" stroke="#00ff00" stroke-width="1" shape-rendering="crispEdges"/>
<polyline points="1803.5,782.9 1821.2,770.6 1846.0,752.9 1863.6,731.7 1881.3,706.9 1899.0,680.4 1920.2,653.9 1937.9,636.2 1955.6,622.1 1969.7,607.9 1973.1,601.6 1992.7,591.8 2012.4,585.2 2035.3,579.3 2058.2,582.6 2077.8,580.3 2097.4,579.3 2110.5,572.1 2123.6,562.3 2144.2,545.1 2158.3,538.0 2172.5,523.9 2186.6,508.3 2200.8,494.2 2214.9,480.0 2229.1,465.9 2243.2,457.4 2257.4,453.1 2277.2,451.1 2294.2,451.1 2304.5,451.6 2319.1,453.4 2333.6,454.1 2355.4,449.7 2373.5,440.7 2395.3,424.3 2413.5,413.4 2429.8,404.3" fill="none" stroke="#00ff00" stroke-width="1" shape-rendering="crispEdges"/>
<rect x="169.5" y="346.5" width="16" height="16.5" fill="#000000"/>
<text x="170.5" y="359.5" font-family="Liberation Sans, sans-serif" font-size="10" font-style="italic" fill="#1a80ff" textLength="13" lengthAdjust="spacingAndGlyphs">ZZ</text>
<rect x="493" y="515" width="16" height="16.5" fill="#000000"/>
<text x="494" y="528" font-family="Liberation Sans, sans-serif" font-size="10" font-style="italic" fill="#1a80ff" textLength="13" lengthAdjust="spacingAndGlyphs">ZZ</text>
<rect x="817" y="128" width="16" height="16.5" fill="#000000"/>
<text x="818" y="141" font-family="Liberation Sans, sans-serif" font-size="10" font-style="italic" fill="#1a80ff" textLength="13" lengthAdjust="spacingAndGlyphs">ZZ</text>
<rect x="1231.5" y="461.5" width="16" height="16.5" fill="#000000"/>
<text x="1232.5" y="474.5" font-family="Liberation Sans, sans-serif" font-size="10" font-style="italic" fill="#1a80ff" textLength="13" lengthAdjust="spacingAndGlyphs">ZZ</text>
<rect x="1312.5" y="341" width="16" height="16.5" fill="#000000"/>
<text x="1313.5" y="354" font-family="Liberation Sans, sans-serif" font-size="10" font-style="italic" fill="#1a80ff" textLength="13" lengthAdjust="spacingAndGlyphs">ZZ</text>
<polyline points="8.5,455.0 170.5,346.5 494.0,532.0 818.0,128.0 1232.5,478.5 1313.5,341.0 1440.0,745.0" fill="none" stroke="#1a80ff" stroke-width="3" stroke-linejoin="miter"/>
<rect x="4.5" y="451" width="8" height="8" fill="#1a80ff"/>
<rect x="166.5" y="342.5" width="8" height="8" fill="#1a80ff"/>
<rect x="490" y="528" width="8" height="8" fill="#1a80ff"/>
<rect x="814" y="124" width="8" height="8" fill="#1a80ff"/>
<rect x="1228.5" y="474.5" width="8" height="8" fill="#1a80ff"/>
<rect x="1309.5" y="337" width="8" height="8" fill="#1a80ff"/>
<text x="8.7" y="442.0" font-family="Liberation Sans, sans-serif" font-size="13.5" font-weight="bold" fill="#00ff00" textLength="16.2" lengthAdjust="spacingAndGlyphs">LH</text>
<text x="126.0" y="356.0" font-family="Liberation Sans, sans-serif" font-size="13.5" font-weight="bold" fill="#00ff00" textLength="19" lengthAdjust="spacingAndGlyphs">HH</text>
<text x="17.3" y="570.0" font-family="Liberation Sans, sans-serif" font-size="13.5" font-weight="bold" fill="#ff0000" textLength="14" lengthAdjust="spacingAndGlyphs">LL</text>
<text x="180.0" y="336.5" font-family="Liberation Sans, sans-serif" font-size="13.5" font-weight="bold" fill="#00ff00" textLength="19" lengthAdjust="spacingAndGlyphs">HH</text>
<text x="161.0" y="479.5" font-family="Liberation Sans, sans-serif" font-size="13.5" font-weight="bold" fill="#ff0000" textLength="17" lengthAdjust="spacingAndGlyphs">HL</text>
<text x="242.0" y="376.0" font-family="Liberation Sans, sans-serif" font-size="13.5" font-weight="bold" fill="#00ff00" textLength="16.2" lengthAdjust="spacingAndGlyphs">LH</text>
<text x="269.0" y="459.5" font-family="Liberation Sans, sans-serif" font-size="13.5" font-weight="bold" fill="#ff0000" textLength="17" lengthAdjust="spacingAndGlyphs">HL</text>
<text x="216.5" y="525.0" font-family="Liberation Sans, sans-serif" font-size="13.5" font-weight="bold" fill="#ff0000" textLength="14" lengthAdjust="spacingAndGlyphs">LL</text>
<text x="350.3" y="263.5" font-family="Liberation Sans, sans-serif" font-size="13.5" font-weight="bold" fill="#00ff00" textLength="19" lengthAdjust="spacingAndGlyphs">HH</text>
<text x="495.0" y="551.0" font-family="Liberation Sans, sans-serif" font-size="13.5" font-weight="bold" fill="#ff0000" textLength="14" lengthAdjust="spacingAndGlyphs">LL</text>
<text x="657.0" y="152.4" font-family="Liberation Sans, sans-serif" font-size="13.5" font-weight="bold" fill="#00ff00" textLength="19" lengthAdjust="spacingAndGlyphs">HH</text>
<text x="728.2" y="158.0" font-family="Liberation Sans, sans-serif" font-size="13.5" font-weight="bold" fill="#00ff00" textLength="16.2" lengthAdjust="spacingAndGlyphs">LH</text>
<text x="693.3" y="254.6" font-family="Liberation Sans, sans-serif" font-size="13.5" font-weight="bold" fill="#ff0000" textLength="17" lengthAdjust="spacingAndGlyphs">HL</text>
<text x="783.0" y="260.7" font-family="Liberation Sans, sans-serif" font-size="13.5" font-weight="bold" fill="#ff0000" textLength="14" lengthAdjust="spacingAndGlyphs">LL</text>
<text x="818.8" y="118.1" font-family="Liberation Sans, sans-serif" font-size="13.5" font-weight="bold" fill="#00ff00" textLength="19" lengthAdjust="spacingAndGlyphs">HH</text>
<text x="890.8" y="176.8" font-family="Liberation Sans, sans-serif" font-size="13.5" font-weight="bold" fill="#00ff00" textLength="16.2" lengthAdjust="spacingAndGlyphs">LH</text>
<text x="855.0" y="274.2" font-family="Liberation Sans, sans-serif" font-size="13.5" font-weight="bold" fill="#ff0000" textLength="14" lengthAdjust="spacingAndGlyphs">LL</text>
<text x="927.0" y="326.5" font-family="Liberation Sans, sans-serif" font-size="13.5" font-weight="bold" fill="#ff0000" textLength="14" lengthAdjust="spacingAndGlyphs">LL</text>
<text x="971.8" y="197.5" font-family="Liberation Sans, sans-serif" font-size="13.5" font-weight="bold" fill="#00ff00" textLength="16.2" lengthAdjust="spacingAndGlyphs">LH</text>
<text x="1115.6" y="343.8" font-family="Liberation Sans, sans-serif" font-size="13.5" font-weight="bold" fill="#00ff00" textLength="16.2" lengthAdjust="spacingAndGlyphs">LH</text>
<text x="1088.9" y="413.2" font-family="Liberation Sans, sans-serif" font-size="13.5" font-weight="bold" fill="#ff0000" textLength="14" lengthAdjust="spacingAndGlyphs">LL</text>
<text x="1206.0" y="348.9" font-family="Liberation Sans, sans-serif" font-size="13.5" font-weight="bold" fill="#00ff00" textLength="16.2" lengthAdjust="spacingAndGlyphs">LH</text>
<text x="1152.0" y="479.0" font-family="Liberation Sans, sans-serif" font-size="13.5" font-weight="bold" fill="#ff0000" textLength="14" lengthAdjust="spacingAndGlyphs">LL</text>
<text x="1251.2" y="518.0" font-family="Liberation Sans, sans-serif" font-size="13.5" font-weight="bold" fill="#ff0000" textLength="14" lengthAdjust="spacingAndGlyphs">LL</text>
<text x="1322.5" y="329.3" font-family="Liberation Sans, sans-serif" font-size="13.5" font-weight="bold" fill="#00ff00" textLength="19" lengthAdjust="spacingAndGlyphs">HH</text>
<text x="1907.8" y="496.6" font-family="Liberation Sans, sans-serif" font-size="13.5" font-weight="bold" fill="#00ff00" textLength="19" lengthAdjust="spacingAndGlyphs">HH</text>
<text x="1952.8" y="624.6" font-family="Liberation Sans, sans-serif" font-size="13.5" font-weight="bold" fill="#ff0000" textLength="17" lengthAdjust="spacingAndGlyphs">HL</text>
<text x="1979.6" y="501.8" font-family="Liberation Sans, sans-serif" font-size="13.5" font-weight="bold" fill="#00ff00" textLength="16.2" lengthAdjust="spacingAndGlyphs">LH</text>
<text x="2043.4" y="690.6" font-family="Liberation Sans, sans-serif" font-size="13.5" font-weight="bold" fill="#ff0000" textLength="14" lengthAdjust="spacingAndGlyphs">LL</text>
<text x="2151.2" y="362.4" font-family="Liberation Sans, sans-serif" font-size="13.5" font-weight="bold" fill="#00ff00" textLength="19" lengthAdjust="spacingAndGlyphs">HH</text>
<text x="2276.6" y="604.0" font-family="Liberation Sans, sans-serif" font-size="13.5" font-weight="bold" fill="#ff0000" textLength="17" lengthAdjust="spacingAndGlyphs">HL</text>
<text x="2403.3" y="243.5" font-family="Liberation Sans, sans-serif" font-size="13.5" font-weight="bold" fill="#00ff00" textLength="19" lengthAdjust="spacingAndGlyphs">HH</text>
<text x="2430.0" y="379.7" font-family="Liberation Sans, sans-serif" font-size="13.5" font-weight="bold" fill="#ff0000" textLength="17" lengthAdjust="spacingAndGlyphs">HL</text>
<polygon points="150,212 153,212 159,218 159,192 163,192 163,218 169,212 173,212 173,215.6 163,225 159,225 150,215.6" fill="#ffff80"/>
<polygon points="807,32 810,32 816,38 816,15 820,15 820,38 826,32 830,32 830,35.6 820,45 816,45 807,35.6" fill="#ffff80"/>
<polygon points="466,619 469,619 474,614 474,638 478,638 478,614 483.5,619 487,619 487,615.5 478,607 474,607 466,615.5" fill="#ffff80"/>
<rect x="345" y="102" width="25" height="37" fill="#ff8000"/>
<text x="354" y="132" font-family="Liberation Sans, sans-serif" font-size="26" font-weight="bold" fill="#000" text-anchor="middle">0</text>
<line x1="8" y1="981.5" x2="2430" y2="981.5" stroke="#ffff00" stroke-width="1"/>
<line x1="8" y1="1055.5" x2="2430" y2="1055.5" stroke="#ff8000" stroke-width="1"/>
<polyline points="8.5,1026.3 17.5,1040.9 26.5,1044.9 35.5,1050.2 44.5,1042.2 53.5,1038.2 62.5,1023.6 71.5,1005.0 80.5,987.8 89.5,981.2 98.5,969.2 107.5,973.2 116.5,964.6 125.5,970.5 134.5,976.5 143.5,985.1 152.5,999.1 161.5,996.4 170.5,985.1 179.5,977.8 188.5,991.1 197.5,1027.6 206.5,1060.1 215.5,1064.8 224.5,1045.5 233.5,1027.0 242.5,1011.7 251.5,1018.3 260.5,1016.3 269.5,1015.7 278.5,998.4 287.5,981.2 296.5,969.2 305.5,969.2 314.5,971.2 323.5,972.5 332.5,970.5 341.5,970.5 350.5,971.2 359.5,977.8 368.5,986.5 377.5,991.5 386.5,990.4 395.5,982.5 404.5,998.4 413.5,1007.7 422.5,1032.9 431.5,1050.2 440.5,1068.5 449.5,1071.4 458.5,1064.1 467.5,1062.1 476.5,1062.1 485.5,1066.8 494.5,1064.8 503.5,1067.4 512.5,1054.2 521.5,1044.9 530.5,1034.9 539.5,1030.3 548.5,1015.7 557.5,990.4 566.5,981.8 575.5,986.5 584.5,991.5 593.5,986.5 602.5,973.9 611.5,968.5 620.5,959.9 629.5,959.6 638.5,958.6 647.5,958.6 656.5,961.2 665.5,970.5 674.5,973.2 683.5,980.5 692.5,979.2 701.5,982.5 710.5,980.5 719.5,979.2 728.5,979.2 737.5,995.5 746.5,996.4 755.5,1003.7 764.5,999.1 773.5,1028.9 782.5,1032.9 791.5,1035.3 800.5,1011.7 809.5,1007.7 818.5,992.4 827.5,994.4 836.5,993.8 845.5,1026.3 854.5,1043.5 863.5,1064.1 872.5,1050.2 881.5,1042.2 890.5,1036.9 899.5,1042.9 908.5,1054.2 917.5,1069.4 926.5,1070.8 935.5,1066.1 944.5,1051.5 953.5,1047.5 962.5,1036.9 971.5,1025.0 980.5,1019.6 989.5,1030.3 998.5,1040.9 1007.5,1035.6 1016.5,1030.9 1025.5,1042.2 1034.5,1064.1 1043.5,1065.4 1052.5,1056.8 1061.5,1054.2 1070.5,1064.8 1079.5,1074.1 1088.5,1068.8 1097.5,1066.8 1106.5,1059.5 1115.5,1064.1 1124.5,1065.4 1133.5,1067.4 1142.5,1071.4 1151.5,1064.1 1160.5,1047.5 1169.5,1032.9 1178.5,1015.7 1187.5,1010.4 1196.5,995.8 1205.5,1005.0 1214.5,1026.3 1223.5,1034.9 1232.5,1029.6 1241.5,1027.6 1250.5,1046.2 1259.5,1064.1 1268.5,1044.9 1277.5,1018.3 1286.5,1007.7 1295.5,1017.0 1304.5,1011.7 1313.5,991.8 1322.5,971.9 1331.5,978.5 1340.5,995.8 1349.5,1012.3 1358.5,1024.3 1367.5,1037.6 1376.5,1049.5 1385.5,1064.8 1394.5,1074.1 1403.5,1076.7 1412.5,1077.4 1421.5,1070.8 1430.5,1067.4 1439.5,1067.4 1448.5,1070.1 1457.5,1070.1 1466.5,1068.1 1475.5,1067.4 1484.5,1070.8 1493.5,1069.4 1502.5,1072.1 1511.5,1073.4 1520.5,1071.4 1529.5,1068.8 1538.5,1056.2 1547.5,1058.8 1556.5,1062.1 1565.5,1071.4 1574.5,1061.5 1583.5,1059.5 1592.5,1063.5 1601.5,1065.4 1610.5,1058.8 1619.5,1044.9 1628.5,1047.3 1637.5,1042.5 1646.5,1050.8 1655.5,1054.2 1664.5,1062.1 1673.5,1056.8 1682.5,1046.2 1691.5,1035.6 1700.5,1037.6 1709.5,1031.6 1718.5,1019.6 1727.5,1006.4 1736.5,1006.4 1745.5,1006.4 1754.5,1006.4 1763.5,1006.4 1772.5,1006.4 1781.5,1006.4 1790.5,1006.4 1799.5,979.8 1808.5,970.5 1817.5,967.2 1826.5,969.9 1835.5,973.9 1844.5,976.5 1853.5,975.2 1862.5,970.5 1871.5,960.6 1880.5,967.9 1889.5,972.5 1898.5,971.2 1907.5,970.5 1916.5,972.5 1925.5,983.8 1934.5,998.4 1943.5,1008.4 1952.5,993.1 1961.5,983.8 1970.5,975.6 1979.5,997.1 1988.5,1019.6 1997.5,1050.2 2006.5,1062.1 2015.5,1065.4 2024.5,1055.5 2033.5,1054.8 2042.5,1051.5 2051.5,1049.5 2060.5,1023.0 2069.5,1007.7 2078.5,991.8 2087.5,990.4 2096.5,982.5 2105.5,972.5 2114.5,963.2 2123.5,960.6 2132.5,961.5 2141.5,960.2 2150.5,964.6 2159.5,970.5 2168.5,973.2 2177.5,975.2 2186.5,973.2 2195.5,979.8 2204.5,991.1 2213.5,994.4 2222.5,1002.4 2231.5,1007.0 2240.5,1025.0 2249.5,1050.2 2258.5,1060.8 2267.5,1072.7 2276.5,1064.1 2285.5,1055.5 2294.5,1040.9 2303.5,1025.0 2312.5,1005.0 2321.5,982.5 2330.5,975.8 2339.5,965.2 2348.5,968.5 2357.5,962.6 2366.5,962.3 2375.5,959.2 2384.5,958.6 2393.5,959.6 2402.5,967.9 2411.5,974.5 2420.5,990.4 2429.5,992.8" fill="none" stroke="#ff00ff" stroke-width="1" shape-rendering="crispEdges"/>
<polyline points="8.5,1034.3 17.5,1068.1 26.5,1029.6 35.5,1050.8 44.5,1046.2 53.5,1019.0 62.5,1006.4 71.5,1000.8 80.5,957.3 89.5,987.8 98.5,962.6 107.5,968.5 116.5,961.2 125.5,982.5 134.5,987.1 143.5,989.8 152.5,1020.3 161.5,979.8 170.5,961.2 179.5,982.5 188.5,1025.0 197.5,1079.4 206.5,1074.7 215.5,1040.9 224.5,1013.0 233.5,1023.6 242.5,998.4 251.5,1033.6 260.5,1019.6 269.5,993.1 278.5,977.2 287.5,970.5 296.5,959.9 305.5,975.2 314.5,975.2 323.5,963.9 332.5,969.2 341.5,974.2 350.5,969.9 359.5,989.1 368.5,998.4 377.5,985.4 386.5,986.5 395.5,975.2 404.5,1033.6 413.5,1011.7 422.5,1056.8 431.5,1079.4 440.5,1079.4 449.5,1042.2 458.5,1064.8 467.5,1076.1 476.5,1045.5 485.5,1079.4 494.5,1069.4 503.5,1054.8 512.5,1040.2 521.5,1042.2 530.5,1027.0 539.5,1021.0 548.5,983.1 557.5,962.6 566.5,998.4 575.5,993.8 584.5,980.5 593.5,985.1 602.5,957.3 611.5,959.9 620.5,959.9 629.5,957.3 638.5,957.3 647.5,959.9 656.5,964.6 665.5,984.5 674.5,969.9 683.5,987.1 692.5,979.8 701.5,978.5 710.5,983.1 719.5,977.8 728.5,977.8 737.5,1032.9 746.5,978.5 755.5,998.4 764.5,1017.0 773.5,1069.4 782.5,1012.3 791.5,1024.3 800.5,1001.7 809.5,998.4 818.5,978.5 827.5,1007.7 836.5,994.4 845.5,1079.4 854.5,1060.1 863.5,1055.5 872.5,1034.5 881.5,1034.5 890.5,1040.9 899.5,1054.2 908.5,1075.4 917.5,1079.4 926.5,1057.5 935.5,1061.5 944.5,1042.2 953.5,1036.9 962.5,1034.9 971.5,1004.4 980.5,1018.3 989.5,1066.1 998.5,1039.6 1007.5,1004.4 1016.5,1048.9 1025.5,1071.4 1034.5,1074.1 1043.5,1049.5 1052.5,1049.5 1061.5,1063.5 1070.5,1079.4 1079.5,1079.4 1088.5,1049.5 1097.5,1069.4 1106.5,1060.1 1115.5,1060.1 1124.5,1074.3 1133.5,1071.4 1142.5,1070.8 1151.5,1055.5 1160.5,1018.3 1169.5,1030.3 1178.5,998.4 1187.5,1004.4 1196.5,984.5 1205.5,1038.2 1214.5,1072.7 1223.5,1007.7 1232.5,1010.4 1241.5,1063.5 1250.5,1073.4 1259.5,1055.5 1268.5,1003.7 1277.5,992.4 1286.5,1026.3 1295.5,1033.6 1304.5,974.5 1313.5,957.3 1322.5,981.2 1331.5,997.1 1340.5,1008.4 1349.5,1032.9 1358.5,1028.3 1367.5,1055.5 1376.5,1064.1 1385.5,1079.4 1394.5,1079.4 1403.5,1074.7 1412.5,1078.7 1421.5,1057.5 1430.5,1064.8 1439.5,1078.7 1448.5,1068.1 1457.5,1065.4 1466.5,1072.1 1475.5,1062.8 1484.5,1077.4 1493.5,1068.8 1502.5,1071.4 1511.5,1079.4 1520.5,1064.1 1529.5,1064.1 1538.5,1038.2 1547.5,1070.8 1556.5,1079.4 1565.5,1060.1 1574.5,1040.2 1583.5,1075.4 1592.5,1075.4 1601.5,1046.2 1610.5,1056.8 1619.5,1030.3 1628.5,1054.8 1637.5,1043.5 1646.5,1056.2 1655.5,1067.4 1664.5,1062.8 1673.5,1038.2 1682.5,1031.6 1691.5,1031.6 1700.5,1049.5 1709.5,1019.6 1718.5,1006.4 1727.5,1006.4 1736.5,1006.4 1745.5,1006.4 1754.5,1006.4 1763.5,1006.4 1772.5,1006.4 1781.5,1006.4 1790.5,1006.4 1799.5,979.8 1808.5,961.2 1817.5,984.5 1826.5,961.2 1835.5,971.9 1844.5,994.4 1853.5,957.3 1862.5,957.3 1871.5,963.9 1880.5,978.5 1889.5,975.2 1898.5,960.6 1907.5,975.8 1916.5,979.8 1925.5,998.4 1934.5,1016.3 1943.5,1008.4 1952.5,965.5 1961.5,982.5 1970.5,978.5 1979.5,1034.3 1988.5,1044.9 1997.5,1072.1 2006.5,1068.1 2015.5,1056.8 2024.5,1040.9 2033.5,1068.1 2042.5,1045.5 2051.5,1035.3 2060.5,991.5 2069.5,991.5 2078.5,991.5 2087.5,987.1 2096.5,967.2 2105.5,961.2 2114.5,960.6 2123.5,960.6 2132.5,963.2 2141.5,957.3 2150.5,972.5 2159.5,980.5 2168.5,966.5 2177.5,977.2 2186.5,977.2 2195.5,985.1 2204.5,1010.4 2213.5,986.5 2222.5,1005.0 2231.5,1025.0 2240.5,1040.9 2249.5,1079.1 2258.5,1063.5 2267.5,1075.4 2276.5,1050.2 2285.5,1040.9 2294.5,1023.4 2303.5,1005.0 2312.5,985.8 2321.5,957.3 2330.5,982.5 2339.5,957.3 2348.5,965.5 2357.5,964.6 2366.5,957.3 2375.5,957.3 2384.5,962.6 2393.5,959.6 2402.5,981.2 2411.5,983.1 2420.5,1006.4 2429.5,991.1" fill="none" stroke="#00ff00" stroke-width="1" shape-rendering="crispEdges"/>
<g shape-rendering="crispEdges">
<rect x="440" y="0" width="1" height="1134" fill="#ffffff"/>
<rect x="0" y="697" width="2593" height="1" fill="#ffffff"/>
</g>
<text x="6" y="12" font-family="Liberation Sans, sans-serif" font-size="11.5" fill="#ffffff" text-anchor="start" xml:space="preserve" textLength="137" lengthAdjust="spacingAndGlyphs">GCLQ8 [C]  610 Trades  #3</text>
<rect x="145" y="0" width="43" height="15" fill="#ffffff"/>
<text x="146.7" y="12" font-family="Liberation Sans, sans-serif" font-size="11.5" fill="#000000" text-anchor="start" xml:space="preserve" textLength="39.3" lengthAdjust="spacingAndGlyphs">C: 73.83</text>
<text x="191" y="12" font-family="Liberation Sans, sans-serif" font-size="11.5" fill="#ffffff" text-anchor="start" xml:space="preserve" textLength="29.7" lengthAdjust="spacingAndGlyphs">T: 610</text>
<rect x="223" y="0" width="50" height="15" fill="#00c000"/>
<rect x="274" y="0" width="60" height="15" fill="#00c000"/>
<text x="225.5" y="12" font-family="Liberation Sans, sans-serif" font-size="11.5" fill="#000000" text-anchor="start" xml:space="preserve" textLength="46.2" lengthAdjust="spacingAndGlyphs">Chg: 0.06</text>
<text x="275.8" y="12" font-family="Liberation Sans, sans-serif" font-size="11.5" fill="#000000" text-anchor="start" xml:space="preserve" textLength="57.1" lengthAdjust="spacingAndGlyphs">DChg: 0.25</text>
<text x="336" y="12" font-family="Liberation Sans, sans-serif" font-size="11.5" fill="#ffffff" text-anchor="start" xml:space="preserve" textLength="102" lengthAdjust="spacingAndGlyphs">2018-07-09 08:03:42</text>
<text x="442" y="12" font-family="Liberation Sans, sans-serif" font-size="11.5" fill="#ffffff" text-anchor="start" xml:space="preserve" textLength="323" lengthAdjust="spacingAndGlyphs">H: 73.84 L: 73.76 O: 73.77 V: 945 DV: 509080 CountDown Timer</text>
<text x="776" y="12" font-family="Liberation Sans, sans-serif" font-size="11.5" fill="#ffffff" text-anchor="start" xml:space="preserve" textLength="234" lengthAdjust="spacingAndGlyphs">(20, 90, No, No, No, No, No, No, No, No, No)</text>
<text x="1017" y="12" font-family="Liberation Sans, sans-serif" font-size="11.5" fill="#ffffff" text-anchor="start" xml:space="preserve" textLength="158" lengthAdjust="spacingAndGlyphs">Moving Average - Exponential</text>
<text x="1182.4" y="12" font-family="Liberation Sans, sans-serif" font-size="11.5" fill="#a0a0a0" text-anchor="start" xml:space="preserve" textLength="53" lengthAdjust="spacingAndGlyphs">Avg: 73.74</text>
<text x="1245" y="12" font-family="Liberation Sans, sans-serif" font-size="11.5" fill="#ffffff" text-anchor="start" xml:space="preserve" textLength="46.5" lengthAdjust="spacingAndGlyphs">(Last, 21)</text>
<text x="1297.7" y="12" font-family="Liberation Sans, sans-serif" font-size="11.5" fill="#ffffff" text-anchor="start" xml:space="preserve" textLength="136" lengthAdjust="spacingAndGlyphs">Moving Average - Simple</text>
<text x="1805" y="12" font-family="Liberation Sans, sans-serif" font-size="11.5" fill="#c0c0c0" text-anchor="start" xml:space="preserve" textLength="27" lengthAdjust="spacingAndGlyphs">73.78</text>
<text x="1838" y="12" font-family="Liberation Sans, sans-serif" font-size="11.5" fill="#ff0000" text-anchor="start" xml:space="preserve" textLength="102" lengthAdjust="spacingAndGlyphs">Bottom Band: 73.61</text>
<text x="1950" y="12" font-family="Liberation Sans, sans-serif" font-size="11.5" fill="#ffffff" text-anchor="start" xml:space="preserve" textLength="88.7" lengthAdjust="spacingAndGlyphs">(Last, 14, 2, Smp)</text>
<text x="2045.5" y="12" font-family="Liberation Sans, sans-serif" font-size="11.5" fill="#ffffff" text-anchor="start" xml:space="preserve" textLength="42" lengthAdjust="spacingAndGlyphs">UPtrend</text>
<text x="2095" y="12" font-family="Liberation Sans, sans-serif" font-size="11.5" fill="#400040" text-anchor="start" xml:space="preserve" textLength="75" lengthAdjust="spacingAndGlyphs">Color Bar: 0.00</text>
<text x="2178.8" y="12" font-family="Liberation Sans, sans-serif" font-size="11.5" fill="#ffffff" text-anchor="start" xml:space="preserve" textLength="413" lengthAdjust="spacingAndGlyphs">(2000, No, Use Input Data, 50, High, Number of Ticks, No, No, Extend to Future</text>
<text x="6" y="900" font-family="Liberation Sans, sans-serif" font-size="11.5" fill="#ffffff" text-anchor="start" xml:space="preserve" textLength="85.8" lengthAdjust="spacingAndGlyphs">Stochastic - Fast</text>
<text x="98.4" y="900" font-family="Liberation Sans, sans-serif" font-size="11.5" fill="#00ff00" text-anchor="start" xml:space="preserve" textLength="49.2" lengthAdjust="spacingAndGlyphs">%K: 72.73</text>
<text x="155" y="900" font-family="Liberation Sans, sans-serif" font-size="11.5" fill="#ff00ff" text-anchor="start" xml:space="preserve" textLength="49" lengthAdjust="spacingAndGlyphs">%D: 70.25</text>
<text x="211.4" y="900" font-family="Liberation Sans, sans-serif" font-size="11.5" fill="#ffff00" text-anchor="start" xml:space="preserve" textLength="60.3" lengthAdjust="spacingAndGlyphs">Line1: 80.00</text>
<text x="278.5" y="900" font-family="Liberation Sans, sans-serif" font-size="11.5" fill="#ff8000" text-anchor="start" xml:space="preserve" textLength="60.5" lengthAdjust="spacingAndGlyphs">Line2: 20.00</text>
<text x="348.4" y="900" font-family="Liberation Sans, sans-serif" font-size="11.5" fill="#ffffff" text-anchor="start" xml:space="preserve" textLength="184.2" lengthAdjust="spacingAndGlyphs">(14, 3, 80, 20, Smp, High, Low, Last)</text>
<g shape-rendering="crispEdges">
<rect x="2593" y="0" width="1" height="1135" fill="#ffffff"/>
<rect x="0" y="1134" width="2594" height="1" fill="#ffffff"/>
<rect x="0" y="0" width="1" height="1119" fill="#ffffff"/>
<text x="2598" y="20.5" font-family="Liberation Sans, sans-serif" font-size="12" fill="#ffffff" text-anchor="start" xml:space="preserve" textLength="27.5" lengthAdjust="spacingAndGlyphs">74.28</text>
<text x="2598" y="46.5" font-family="Liberation Sans, sans-serif" font-size="12" fill="#ffffff" text-anchor="start" xml:space="preserve" textLength="27.5" lengthAdjust="spacingAndGlyphs">74.24</text>
<text x="2598" y="73.5" font-family="Liberation Sans, sans-serif" font-size="12" fill="#ffffff" text-anchor="start" xml:space="preserve" textLength="27.5" lengthAdjust="spacingAndGlyphs">74.20</text>
<text x="2598" y="99.5" font-family="Liberation Sans, sans-serif" font-size="12" fill="#ffffff" text-anchor="start" xml:space="preserve" textLength="27.5" lengthAdjust="spacingAndGlyphs">74.16</text>
<text x="2598" y="125.5" font-family="Liberation Sans, sans-serif" font-size="12" fill="#ffffff" text-anchor="start" xml:space="preserve" textLength="27.5" lengthAdjust="spacingAndGlyphs">74.12</text>
<text x="2598" y="152.5" font-family="Liberation Sans, sans-serif" font-size="12" fill="#ffffff" text-anchor="start" xml:space="preserve" textLength="27.5" lengthAdjust="spacingAndGlyphs">74.08</text>
<text x="2598" y="178.5" font-family="Liberation Sans, sans-serif" font-size="12" fill="#ffffff" text-anchor="start" xml:space="preserve" textLength="27.5" lengthAdjust="spacingAndGlyphs">74.04</text>
<text x="2598" y="205.5" font-family="Liberation Sans, sans-serif" font-size="12" fill="#ffffff" text-anchor="start" xml:space="preserve" textLength="27.5" lengthAdjust="spacingAndGlyphs">74.00</text>
<text x="2598" y="231.5" font-family="Liberation Sans, sans-serif" font-size="12" fill="#ffffff" text-anchor="start" xml:space="preserve" textLength="27.5" lengthAdjust="spacingAndGlyphs">73.96</text>
<text x="2598" y="258.5" font-family="Liberation Sans, sans-serif" font-size="12" fill="#ffffff" text-anchor="start" xml:space="preserve" textLength="27.5" lengthAdjust="spacingAndGlyphs">73.92</text>
<text x="2598" y="284.5" font-family="Liberation Sans, sans-serif" font-size="12" fill="#ffffff" text-anchor="start" xml:space="preserve" textLength="27.5" lengthAdjust="spacingAndGlyphs">73.88</text>
<text x="2598" y="311.5" font-family="Liberation Sans, sans-serif" font-size="12" fill="#ffffff" text-anchor="start" xml:space="preserve" textLength="27.5" lengthAdjust="spacingAndGlyphs">73.84</text>
<text x="2598" y="337.5" font-family="Liberation Sans, sans-serif" font-size="12" fill="#ffffff" text-anchor="start" xml:space="preserve" textLength="27.5" lengthAdjust="spacingAndGlyphs">73.80</text>
<text x="2598" y="364.5" font-family="Liberation Sans, sans-serif" font-size="12" fill="#ffffff" text-anchor="start" xml:space="preserve" textLength="27.5" lengthAdjust="spacingAndGlyphs">73.76</text>
<text x="2598" y="390.5" font-family="Liberation Sans, sans-serif" font-size="12" fill="#ffffff" text-anchor="start" xml:space="preserve" textLength="27.5" lengthAdjust="spacingAndGlyphs">73.72</text>
<text x="2598" y="417.5" font-family="Liberation Sans, sans-serif" font-size="12" fill="#ffffff" text-anchor="start" xml:space="preserve" textLength="27.5" lengthAdjust="spacingAndGlyphs">73.68</text>
<text x="2598" y="443.5" font-family="Liberation Sans, sans-serif" font-size="12" fill="#ffffff" text-anchor="start" xml:space="preserve" textLength="27.5" lengthAdjust="spacingAndGlyphs">73.64</text>
<text x="2598" y="469.5" font-family="Liberation Sans, sans-serif" font-size="12" fill="#ffffff" text-anchor="start" xml:space="preserve" textLength="27.5" lengthAdjust="spacingAndGlyphs">73.60</text>
<text x="2598" y="496.5" font-family="Liberation Sans, sans-serif" font-size="12" fill="#ffffff" text-anchor="start" xml:space="preserve" textLength="27.5" lengthAdjust="spacingAndGlyphs">73.56</text>
<text x="2598" y="522.5" font-family="Liberation Sans, sans-serif" font-size="12" fill="#ffffff" text-anchor="start" xml:space="preserve" textLength="27.5" lengthAdjust="spacingAndGlyphs">73.52</text>
<text x="2598" y="549.5" font-family="Liberation Sans, sans-serif" font-size="12" fill="#ffffff" text-anchor="start" xml:space="preserve" textLength="27.5" lengthAdjust="spacingAndGlyphs">73.48</text>
<text x="2598" y="575.5" font-family="Liberation Sans, sans-serif" font-size="12" fill="#ffffff" text-anchor="start" xml:space="preserve" textLength="27.5" lengthAdjust="spacingAndGlyphs">73.44</text>
<text x="2598" y="602.5" font-family="Liberation Sans, sans-serif" font-size="12" fill="#ffffff" text-anchor="start" xml:space="preserve" textLength="27.5" lengthAdjust="spacingAndGlyphs">73.40</text>
<text x="2598" y="628.5" font-family="Liberation Sans, sans-serif" font-size="12" fill="#ffffff" text-anchor="start" xml:space="preserve" textLength="27.5" lengthAdjust="spacingAndGlyphs">73.36</text>
<text x="2598" y="655.5" font-family="Liberation Sans, sans-serif" font-size="12" fill="#ffffff" text-anchor="start" xml:space="preserve" textLength="27.5" lengthAdjust="spacingAndGlyphs">73.32</text>
<text x="2598" y="681.5" font-family="Liberation Sans, sans-serif" font-size="12" fill="#ffffff" text-anchor="start" xml:space="preserve" textLength="27.5" lengthAdjust="spacingAndGlyphs">73.28</text>
<text x="2598" y="708.5" font-family="Liberation Sans, sans-serif" font-size="12" fill="#ffffff" text-anchor="start" xml:space="preserve" textLength="27.5" lengthAdjust="spacingAndGlyphs">73.24</text>
<text x="2598" y="734.5" font-family="Liberation Sans, sans-serif" font-size="12" fill="#ffffff" text-anchor="start" xml:space="preserve" textLength="27.5" lengthAdjust="spacingAndGlyphs">73.20</text>
<text x="2598" y="760.5" font-family="Liberation Sans, sans-serif" font-size="12" fill="#ffffff" text-anchor="start" xml:space="preserve" textLength="27.5" lengthAdjust="spacingAndGlyphs">73.16</text>
<text x="2598" y="787.5" font-family="Liberation Sans, sans-serif" font-size="12" fill="#ffffff" text-anchor="start" xml:space="preserve" textLength="27.5" lengthAdjust="spacingAndGlyphs">73.12</text>
<text x="2598" y="813.5" font-family="Liberation Sans, sans-serif" font-size="12" fill="#ffffff" text-anchor="start" xml:space="preserve" textLength="27.5" lengthAdjust="spacingAndGlyphs">73.08</text>
<text x="2598" y="840.5" font-family="Liberation Sans, sans-serif" font-size="12" fill="#ffffff" text-anchor="start" xml:space="preserve" textLength="27.5" lengthAdjust="spacingAndGlyphs">73.04</text>
<text x="2598" y="866.5" font-family="Liberation Sans, sans-serif" font-size="12" fill="#ffffff" text-anchor="start" xml:space="preserve" textLength="27.5" lengthAdjust="spacingAndGlyphs">73.00</text>
<text x="2598" y="912.5" font-family="Liberation Sans, sans-serif" font-size="12" fill="#ffffff" text-anchor="start" xml:space="preserve" textLength="33.5" lengthAdjust="spacingAndGlyphs">140.00</text>
<text x="2598" y="936.5" font-family="Liberation Sans, sans-serif" font-size="12" fill="#ffffff" text-anchor="start" xml:space="preserve" textLength="33.5" lengthAdjust="spacingAndGlyphs">120.00</text>
<text x="2598" y="961.5" font-family="Liberation Sans, sans-serif" font-size="12" fill="#ffffff" text-anchor="start" xml:space="preserve" textLength="33.5" lengthAdjust="spacingAndGlyphs">100.00</text>
<text x="2598" y="985.5" font-family="Liberation Sans, sans-serif" font-size="12" fill="#ffffff" text-anchor="start" xml:space="preserve" textLength="27.5" lengthAdjust="spacingAndGlyphs">80.00</text>
<text x="2598" y="1010.5" font-family="Liberation Sans, sans-serif" font-size="12" fill="#ffffff" text-anchor="start" xml:space="preserve" textLength="27.5" lengthAdjust="spacingAndGlyphs">60.00</text>
<text x="2598" y="1034.5" font-family="Liberation Sans, sans-serif" font-size="12" fill="#ffffff" text-anchor="start" xml:space="preserve" textLength="27.5" lengthAdjust="spacingAndGlyphs">40.00</text>
<text x="2598" y="1059.5" font-family="Liberation Sans, sans-serif" font-size="12" fill="#ffffff" text-anchor="start" xml:space="preserve" textLength="27.5" lengthAdjust="spacingAndGlyphs">20.00</text>
<text x="2598" y="1083.5" font-family="Liberation Sans, sans-serif" font-size="12" fill="#ffffff" text-anchor="start" xml:space="preserve" textLength="21.5" lengthAdjust="spacingAndGlyphs">0.00</text>
<text x="2598" y="1108.5" font-family="Liberation Sans, sans-serif" font-size="12" fill="#ffffff" text-anchor="start" xml:space="preserve" textLength="31.0" lengthAdjust="spacingAndGlyphs">-20.00</text>
<text x="2598" y="1132.5" font-family="Liberation Sans, sans-serif" font-size="12" fill="#ffffff" text-anchor="start" xml:space="preserve" textLength="31.0" lengthAdjust="spacingAndGlyphs">-40.00</text>
<rect x="2594" y="16" width="3" height="1" fill="#fff"/><rect x="2594" y="42" width="3" height="1" fill="#fff"/><rect x="2594" y="69" width="3" height="1" fill="#fff"/><rect x="2594" y="95" width="3" height="1" fill="#fff"/><rect x="2594" y="121" width="3" height="1" fill="#fff"/><rect x="2594" y="148" width="3" height="1" fill="#fff"/><rect x="2594" y="174" width="3" height="1" fill="#fff"/><rect x="2594" y="201" width="3" height="1" fill="#fff"/><rect x="2594" y="227" width="3" height="1" fill="#fff"/><rect x="2594" y="254" width="3" height="1" fill="#fff"/><rect x="2594" y="280" width="3" height="1" fill="#fff"/><rect x="2594" y="307" width="3" height="1" fill="#fff"/><rect x="2594" y="333" width="3" height="1" fill="#fff"/><rect x="2594" y="360" width="3" height="1" fill="#fff"/><rect x="2594" y="386" width="3" height="1" fill="#fff"/><rect x="2594" y="413" width="3" height="1" fill="#fff"/><rect x="2594" y="439" width="3" height="1" fill="#fff"/><rect x="2594" y="465" width="3" height="1" fill="#fff"/><rect x="2594" y="492" width="3" height="1" fill="#fff"/><rect x="2594" y="518" width="3" height="1" fill="#fff"/><rect x="2594" y="545" width="3" height="1" fill="#fff"/><rect x="2594" y="571" width="3" height="1" fill="#fff"/><rect x="2594" y="598" width="3" height="1" fill="#fff"/><rect x="2594" y="624" width="3" height="1" fill="#fff"/><rect x="2594" y="651" width="3" height="1" fill="#fff"/><rect x="2594" y="677" width="3" height="1" fill="#fff"/><rect x="2594" y="704" width="3" height="1" fill="#fff"/><rect x="2594" y="730" width="3" height="1" fill="#fff"/><rect x="2594" y="756" width="3" height="1" fill="#fff"/><rect x="2594" y="783" width="3" height="1" fill="#fff"/><rect x="2594" y="809" width="3" height="1" fill="#fff"/><rect x="2594" y="836" width="3" height="1" fill="#fff"/><rect x="2594" y="862" width="3" height="1" fill="#fff"/><rect x="2594" y="908" width="3" height="1" fill="#fff"/><rect x="2594" y="932" width="3" height="1" fill="#fff"/><rect x="2594" y="957" width="3" height="1" fill="#fff"/><rect x="2594" y="981" width="3" height="1" fill="#fff"/><rect x="2594" y="1006" width="3" height="1" fill="#fff"/><rect x="2594" y="1030" width="3" height="1" fill="#fff"/><rect x="2594" y="1055" width="3" height="1" fill="#fff"/><rect x="2594" y="1079" width="3" height="1" fill="#fff"/><rect x="2594" y="1104" width="3" height="1" fill="#fff"/><rect x="2594" y="1128" width="3" height="1" fill="#fff"/>
</g>
<rect x="2597" y="306" width="29" height="15" fill="#ffffff"/>
<text x="2598.5" y="318" font-family="Liberation Sans, sans-serif" font-size="11" fill="#000000" text-anchor="start" xml:space="preserve" textLength="26.5" lengthAdjust="spacingAndGlyphs">73.83</text>
<rect x="2598" y="689" width="27" height="15" fill="#ffffff"/>
<text x="2598.5" y="701" font-family="Liberation Sans, sans-serif" font-size="11" fill="#000000" text-anchor="start" xml:space="preserve" textLength="26.5" lengthAdjust="spacingAndGlyphs">73.25</text>
<rect x="2597" y="982" width="29" height="15" fill="#00ff00"/>
<text x="2598.5" y="994" font-family="Liberation Sans, sans-serif" font-size="11" fill="#000000" text-anchor="start" xml:space="preserve" textLength="26.5" lengthAdjust="spacingAndGlyphs">72.73</text>
<text x="62.5" y="1150" font-family="Liberation Sans, sans-serif" font-size="12" fill="#ffffff" text-anchor="middle" xml:space="preserve" textLength="36.5" lengthAdjust="spacingAndGlyphs">2:04:43</text>
<text x="107.5" y="1150" font-family="Liberation Sans, sans-serif" font-size="12" fill="#ffffff" text-anchor="middle" xml:space="preserve" textLength="36.5" lengthAdjust="spacingAndGlyphs">2:25:10</text>
<text x="152.5" y="1150" font-family="Liberation Sans, sans-serif" font-size="12" fill="#ffffff" text-anchor="middle" xml:space="preserve" textLength="36.5" lengthAdjust="spacingAndGlyphs">2:44:28</text>
<text x="197.5" y="1150" font-family="Liberation Sans, sans-serif" font-size="12" fill="#ffffff" text-anchor="middle" xml:space="preserve" textLength="36.5" lengthAdjust="spacingAndGlyphs">3:10:51</text>
<text x="242.5" y="1150" font-family="Liberation Sans, sans-serif" font-size="12" fill="#ffffff" text-anchor="middle" xml:space="preserve" textLength="36.5" lengthAdjust="spacingAndGlyphs">3:35:03</text>
<text x="287.5" y="1150" font-family="Liberation Sans, sans-serif" font-size="12" fill="#ffffff" text-anchor="middle" xml:space="preserve" textLength="36.5" lengthAdjust="spacingAndGlyphs">4:05:44</text>
<text x="332.5" y="1150" font-family="Liberation Sans, sans-serif" font-size="12" fill="#ffffff" text-anchor="middle" xml:space="preserve" textLength="36.5" lengthAdjust="spacingAndGlyphs">4:10:24</text>
<text x="377.5" y="1150" font-family="Liberation Sans, sans-serif" font-size="12" fill="#ffffff" text-anchor="middle" xml:space="preserve" textLength="36.5" lengthAdjust="spacingAndGlyphs">4:49:01</text>
<text x="422.5" y="1150" font-family="Liberation Sans, sans-serif" font-size="12" fill="#ffffff" text-anchor="middle" xml:space="preserve" textLength="36.5" lengthAdjust="spacingAndGlyphs">4:57:47</text>
<text x="467.5" y="1150" font-family="Liberation Sans, sans-serif" font-size="12" fill="#ffffff" text-anchor="middle" xml:space="preserve" textLength="36.5" lengthAdjust="spacingAndGlyphs">5:03:22</text>
<text x="512.5" y="1150" font-family="Liberation Sans, sans-serif" font-size="12" fill="#ffffff" text-anchor="middle" xml:space="preserve" textLength="36.5" lengthAdjust="spacingAndGlyphs">5:08:22</text>
<text x="557.5" y="1150" font-family="Liberation Sans, sans-serif" font-size="12" fill="#ffffff" text-anchor="middle" xml:space="preserve" textLength="36.5" lengthAdjust="spacingAndGlyphs">5:10:33</text>
<text x="602.5" y="1150" font-family="Liberation Sans, sans-serif" font-size="12" fill="#ffffff" text-anchor="middle" xml:space="preserve" textLength="36.5" lengthAdjust="spacingAndGlyphs">5:24:07</text>
<text x="647.5" y="1150" font-family="Liberation Sans, sans-serif" font-size="12" fill="#ffffff" text-anchor="middle" xml:space="preserve" textLength="36.5" lengthAdjust="spacingAndGlyphs">5:26:15</text>
<text x="692.5" y="1150" font-family="Liberation Sans, sans-serif" font-size="12" fill="#ffffff" text-anchor="middle" xml:space="preserve" textLength="36.5" lengthAdjust="spacingAndGlyphs">5:28:46</text>
<text x="737.5" y="1150" font-family="Liberation Sans, sans-serif" font-size="12" fill="#ffffff" text-anchor="middle" xml:space="preserve" textLength="36.5" lengthAdjust="spacingAndGlyphs">5:36:08</text>
<text x="782.5" y="1150" font-family="Liberation Sans, sans-serif" font-size="12" fill="#ffffff" text-anchor="middle" xml:space="preserve" textLength="36.5" lengthAdjust="spacingAndGlyphs">5:46:30</text>
<text x="827.5" y="1150" font-family="Liberation Sans, sans-serif" font-size="12" fill="#ffffff" text-anchor="middle" xml:space="preserve" textLength="36.5" lengthAdjust="spacingAndGlyphs">5:59:28</text>
<text x="872.5" y="1150" font-family="Liberation Sans, sans-serif" font-size="12" fill="#ffffff" text-anchor="middle" xml:space="preserve" textLength="36.5" lengthAdjust="spacingAndGlyphs">6:02:15</text>
<text x="917.5" y="1150" font-family="Liberation Sans, sans-serif" font-size="12" fill="#ffffff" text-anchor="middle" xml:space="preserve" textLength="36.5" lengthAdjust="spacingAndGlyphs">6:09:16</text>
<text x="962.5" y="1150" font-family="Liberation Sans, sans-serif" font-size="12" fill="#ffffff" text-anchor="middle" xml:space="preserve" textLength="36.5" lengthAdjust="spacingAndGlyphs">6:15:34</text>
<text x="1007.5" y="1150" font-family="Liberation Sans, sans-serif" font-size="12" fill="#ffffff" text-anchor="middle" xml:space="preserve" textLength="36.5" lengthAdjust="spacingAndGlyphs">6:24:44</text>
<text x="1052.5" y="1150" font-family="Liberation Sans, sans-serif" font-size="12" fill="#ffffff" text-anchor="middle" xml:space="preserve" textLength="36.5" lengthAdjust="spacingAndGlyphs">6:30:19</text>
<text x="1097.5" y="1150" font-family="Liberation Sans, sans-serif" font-size="12" fill="#ffffff" text-anchor="middle" xml:space="preserve" textLength="36.5" lengthAdjust="spacingAndGlyphs">6:33:49</text>
<text x="1142.5" y="1150" font-family="Liberation Sans, sans-serif" font-size="12" fill="#ffffff" text-anchor="middle" xml:space="preserve" textLength="36.5" lengthAdjust="spacingAndGlyphs">6:40:17</text>
<text x="1187.5" y="1150" font-family="Liberation Sans, sans-serif" font-size="12" fill="#ffffff" text-anchor="middle" xml:space="preserve" textLength="36.5" lengthAdjust="spacingAndGlyphs">6:45:12</text>
<text x="1232.5" y="1150" font-family="Liberation Sans, sans-serif" font-size="12" fill="#ffffff" text-anchor="middle" xml:space="preserve" textLength="36.5" lengthAdjust="spacingAndGlyphs">6:51:29</text>
<text x="1277.5" y="1150" font-family="Liberation Sans, sans-serif" font-size="12" fill="#ffffff" text-anchor="middle" xml:space="preserve" textLength="36.5" lengthAdjust="spacingAndGlyphs">6:53:22</text>
<text x="1322.5" y="1150" font-family="Liberation Sans, sans-serif" font-size="12" fill="#ffffff" text-anchor="middle" xml:space="preserve" textLength="36.5" lengthAdjust="spacingAndGlyphs">6:56:32</text>
<text x="1367.5" y="1150" font-family="Liberation Sans, sans-serif" font-size="12" fill="#ffffff" text-anchor="middle" xml:space="preserve" textLength="36.5" lengthAdjust="spacingAndGlyphs">7:01:37</text>
<text x="1412.5" y="1150" font-family="Liberation Sans, sans-serif" font-size="12" fill="#ffffff" text-anchor="middle" xml:space="preserve" textLength="36.5" lengthAdjust="spacingAndGlyphs">7:03:27</text>
<text x="1457.5" y="1150" font-family="Liberation Sans, sans-serif" font-size="12" fill="#ffffff" text-anchor="middle" xml:space="preserve" textLength="36.5" lengthAdjust="spacingAndGlyphs">7:03:37</text>
<text x="1502.5" y="1150" font-family="Liberation Sans, sans-serif" font-size="12" fill="#ffffff" text-anchor="middle" xml:space="preserve" textLength="36.5" lengthAdjust="spacingAndGlyphs">7:03:59</text>
<text x="1547.5" y="1150" font-family="Liberation Sans, sans-serif" font-size="12" fill="#ffffff" text-anchor="middle" xml:space="preserve" textLength="36.5" lengthAdjust="spacingAndGlyphs">7:04:50</text>
<text x="1592.5" y="1150" font-family="Liberation Sans, sans-serif" font-size="12" fill="#ffffff" text-anchor="middle" xml:space="preserve" textLength="36.5" lengthAdjust="spacingAndGlyphs">7:05:55</text>
<text x="1637.5" y="1150" font-family="Liberation Sans, sans-serif" font-size="12" fill="#ffffff" text-anchor="middle" xml:space="preserve" textLength="36.5" lengthAdjust="spacingAndGlyphs">7:07:12</text>
<text x="1682.5" y="1150" font-family="Liberation Sans, sans-serif" font-size="12" fill="#ffffff" text-anchor="middle" xml:space="preserve" textLength="36.5" lengthAdjust="spacingAndGlyphs">7:08:44</text>
<text x="1727.5" y="1150" font-family="Liberation Sans, sans-serif" font-size="12" fill="#ffffff" text-anchor="middle" xml:space="preserve" textLength="36.5" lengthAdjust="spacingAndGlyphs">7:11:05</text>
<text x="1772.5" y="1150" font-family="Liberation Sans, sans-serif" font-size="12" fill="#ffffff" text-anchor="middle" xml:space="preserve" textLength="36.5" lengthAdjust="spacingAndGlyphs">7:13:52</text>
<text x="1817.5" y="1150" font-family="Liberation Sans, sans-serif" font-size="12" fill="#ffffff" text-anchor="middle" xml:space="preserve" textLength="36.5" lengthAdjust="spacingAndGlyphs">7:16:37</text>
<text x="1862.5" y="1150" font-family="Liberation Sans, sans-serif" font-size="12" fill="#ffffff" text-anchor="middle" xml:space="preserve" textLength="36.5" lengthAdjust="spacingAndGlyphs">7:18:57</text>
<text x="1907.5" y="1150" font-family="Liberation Sans, sans-serif" font-size="12" fill="#ffffff" text-anchor="middle" xml:space="preserve" textLength="36.5" lengthAdjust="spacingAndGlyphs">7:19:53</text>
<text x="1952.5" y="1150" font-family="Liberation Sans, sans-serif" font-size="12" fill="#ffffff" text-anchor="middle" xml:space="preserve" textLength="36.5" lengthAdjust="spacingAndGlyphs">7:22:34</text>
<text x="1997.5" y="1150" font-family="Liberation Sans, sans-serif" font-size="12" fill="#ffffff" text-anchor="middle" xml:space="preserve" textLength="36.5" lengthAdjust="spacingAndGlyphs">7:26:32</text>
<text x="2042.5" y="1150" font-family="Liberation Sans, sans-serif" font-size="12" fill="#ffffff" text-anchor="middle" xml:space="preserve" textLength="36.5" lengthAdjust="spacingAndGlyphs">7:32:13</text>
<text x="2087.5" y="1150" font-family="Liberation Sans, sans-serif" font-size="12" fill="#ffffff" text-anchor="middle" xml:space="preserve" textLength="36.5" lengthAdjust="spacingAndGlyphs">7:37:08</text>
<text x="2132.5" y="1150" font-family="Liberation Sans, sans-serif" font-size="12" fill="#ffffff" text-anchor="middle" xml:space="preserve" textLength="36.5" lengthAdjust="spacingAndGlyphs">7:40:27</text>
<text x="2177.5" y="1150" font-family="Liberation Sans, sans-serif" font-size="12" fill="#ffffff" text-anchor="middle" xml:space="preserve" textLength="36.5" lengthAdjust="spacingAndGlyphs">7:41:15</text>
<text x="2222.5" y="1150" font-family="Liberation Sans, sans-serif" font-size="12" fill="#ffffff" text-anchor="middle" xml:space="preserve" textLength="36.5" lengthAdjust="spacingAndGlyphs">7:45:52</text>
<text x="2267.5" y="1150" font-family="Liberation Sans, sans-serif" font-size="12" fill="#ffffff" text-anchor="middle" xml:space="preserve" textLength="36.5" lengthAdjust="spacingAndGlyphs">7:52:44</text>
<text x="2312.5" y="1150" font-family="Liberation Sans, sans-serif" font-size="12" fill="#ffffff" text-anchor="middle" xml:space="preserve" textLength="36.5" lengthAdjust="spacingAndGlyphs">7:57:46</text>
<text x="2357.5" y="1150" font-family="Liberation Sans, sans-serif" font-size="12" fill="#ffffff" text-anchor="middle" xml:space="preserve" textLength="36.5" lengthAdjust="spacingAndGlyphs">8:01:13</text>
<text x="2402.5" y="1150" font-family="Liberation Sans, sans-serif" font-size="12" fill="#ffffff" text-anchor="middle" xml:space="preserve" textLength="36.5" lengthAdjust="spacingAndGlyphs">8:02:27</text>
<text x="2447.5" y="1150" font-family="Liberation Sans, sans-serif" font-size="12" fill="#ffffff" text-anchor="middle" xml:space="preserve" textLength="36.5" lengthAdjust="spacingAndGlyphs">8:05:07</text>
<text x="2492.5" y="1150" font-family="Liberation Sans, sans-serif" font-size="12" fill="#ffffff" text-anchor="middle" xml:space="preserve" textLength="36.5" lengthAdjust="spacingAndGlyphs">8:07:20</text>
<text x="2537.5" y="1150" font-family="Liberation Sans, sans-serif" font-size="12" fill="#ffffff" text-anchor="middle" xml:space="preserve" textLength="36.5" lengthAdjust="spacingAndGlyphs">8:12:13</text>
<text x="2582.5" y="1150" font-family="Liberation Sans, sans-serif" font-size="12" fill="#ffffff" text-anchor="middle" xml:space="preserve" textLength="36.5" lengthAdjust="spacingAndGlyphs">8:16:26</text>
<g shape-rendering="crispEdges"><rect x="8" y="1135" width="1" height="3" fill="#fff"/><rect x="62" y="1135" width="1" height="3" fill="#fff"/><rect x="107" y="1135" width="1" height="3" fill="#fff"/><rect x="152" y="1135" width="1" height="3" fill="#fff"/><rect x="197" y="1135" width="1" height="3" fill="#fff"/><rect x="242" y="1135" width="1" height="3" fill="#fff"/><rect x="287" y="1135" width="1" height="3" fill="#fff"/><rect x="332" y="1135" width="1" height="3" fill="#fff"/><rect x="377" y="1135" width="1" height="3" fill="#fff"/><rect x="422" y="1135" width="1" height="3" fill="#fff"/><rect x="467" y="1135" width="1" height="3" fill="#fff"/><rect x="512" y="1135" width="1" height="3" fill="#fff"/><rect x="557" y="1135" width="1" height="3" fill="#fff"/><rect x="602" y="1135" width="1" height="3" fill="#fff"/><rect x="647" y="1135" width="1" height="3" fill="#fff"/><rect x="692" y="1135" width="1" height="3" fill="#fff"/><rect x="737" y="1135" width="1" height="3" fill="#fff"/><rect x="782" y="1135" width="1" height="3" fill="#fff"/><rect x="827" y="1135" width="1" height="3" fill="#fff"/><rect x="872" y="1135" width="1" height="3" fill="#fff"/><rect x="917" y="1135" width="1" height="3" fill="#fff"/><rect x="962" y="1135" width="1" height="3" fill="#fff"/><rect x="1007" y="1135" width="1" height="3" fill="#fff"/><rect x="1052" y="1135" width="1" height="3" fill="#fff"/><rect x="1097" y="1135" width="1" height="3" fill="#fff"/><rect x="1142" y="1135" width="1" height="3" fill="#fff"/><rect x="1187" y="1135" width="1" height="3" fill="#fff"/><rect x="1232" y="1135" width="1" height="3" fill="#fff"/><rect x="1277" y="1135" width="1" height="3" fill="#fff"/><rect x="1322" y="1135" width="1" height="3" fill="#fff"/><rect x="1367" y="1135" width="1" height="3" fill="#fff"/><rect x="1412" y="1135" width="1" height="3" fill="#fff"/><rect x="1457" y="1135" width="1" height="3" fill="#fff"/><rect x="1502" y="1135" width="1" height="3" fill="#fff"/><rect x="1547" y="1135" width="1" height="3" fill="#fff"/><rect x="1592" y="1135" width="1" height="3" fill="#fff"/><rect x="1637" y="1135" width="1" height="3" fill="#fff"/><rect x="1682" y="1135" width="1" height="3" fill="#fff"/><rect x="1727" y="1135" width="1" height="3" fill="#fff"/><rect x="1772" y="1135" width="1" height="3" fill="#fff"/><rect x="1817" y="1135" width="1" height="3" fill="#fff"/><rect x="1862" y="1135" width="1" height="3" fill="#fff"/><rect x="1907" y="1135" width="1" height="3" fill="#fff"/><rect x="1952" y="1135" width="1" height="3" fill="#fff"/><rect x="1997" y="1135" width="1" height="3" fill="#fff"/><rect x="2042" y="1135" width="1" height="3" fill="#fff"/><rect x="2087" y="1135" width="1" height="3" fill="#fff"/><rect x="2132" y="1135" width="1" height="3" fill="#fff"/><rect x="2177" y="1135" width="1" height="3" fill="#fff"/><rect x="2222" y="1135" width="1" height="3" fill="#fff"/><rect x="2267" y="1135" width="1" height="3" fill="#fff"/><rect x="2312" y="1135" width="1" height="3" fill="#fff"/><rect x="2357" y="1135" width="1" height="3" fill="#fff"/><rect x="2402" y="1135" width="1" height="3" fill="#fff"/><rect x="2447" y="1135" width="1" height="3" fill="#fff"/><rect x="2492" y="1135" width="1" height="3" fill="#fff"/><rect x="2537" y="1135" width="1" height="3" fill="#fff"/><rect x="2582" y="1135" width="1" height="3" fill="#fff"/></g>
<rect x="1" y="1138" width="31" height="15" fill="#ffffff"/>
<text x="3.2" y="1150" font-family="Liberation Sans, sans-serif" font-size="12" fill="#000000" text-anchor="start" xml:space="preserve" textLength="27.8" lengthAdjust="spacingAndGlyphs">8-7-9</text>
<rect x="367" y="1138" width="145" height="15" fill="#ffffff"/>
<text x="373.5" y="1150" font-family="Liberation Sans, sans-serif" font-size="12" fill="#000000" text-anchor="start" xml:space="preserve" textLength="134.5" lengthAdjust="spacingAndGlyphs">Mon 2018-07-09  04:57:47</text>
<rect x="2607" y="1138" width="23" height="15" fill="#ff0000"/>
<text x="2611" y="1150" font-family="Liberation Sans, sans-serif" font-size="11" fill="#ffffff" text-anchor="start" xml:space="preserve" >8 L</text>
<text x="1" y="1131" font-family="Liberation Sans, sans-serif" font-size="12" fill="#ffffff" text-anchor="start" xml:space="preserve" >www.sierrachart.com</text>
<rect x="1428" y="0" width="376" height="1035" fill="#000000"/><g shape-rendering="crispEdges"><rect x="1428" y="0" width="2" height="1035" fill="#a0a0a0"/><rect x="1802" y="0" width="2" height="1035" fill="#f0f0f0"/><rect x="1428" y="1033" width="376" height="2" fill="#f0f0f0"/><rect x="1616" y="0" width="1" height="3" fill="#a0a0a0"/><rect x="1430" y="3" width="372" height="1" fill="#a0a0a0"/><rect x="1430" y="41" width="372" height="1" fill="#a0a0a0"/><rect x="1430" y="42" width="372" height="18" fill="#ffffff"/><rect x="1430" y="60" width="372" height="1" fill="#a0a0a0"/><rect x="1430" y="79" width="372" height="1" fill="#a0a0a0"/><rect x="1616" y="80" width="1" height="18" fill="#a0a0a0"/><rect x="1430" y="98" width="372" height="1" fill="#a0a0a0"/><rect x="1616" y="99" width="1" height="18" fill="#a0a0a0"/><rect x="1430" y="117" width="372" height="1" fill="#a0a0a0"/><rect x="1616" y="118" width="1" height="18" fill="#a0a0a0"/><rect x="1430" y="136" width="372" height="1" fill="#a0a0a0"/><rect x="1616" y="137" width="1" height="18" fill="#a0a0a0"/><rect x="1430" y="155" width="372" height="1" fill="#a0a0a0"/><rect x="1616" y="156" width="1" height="18" fill="#a0a0a0"/><rect x="1430" y="174" width="372" height="1" fill="#a0a0a0"/><rect x="1616" y="175" width="1" height="18" fill="#a0a0a0"/><rect x="1430" y="193" width="372" height="1" fill="#a0a0a0"/><rect x="1430" y="212" width="372" height="1" fill="#a0a0a0"/><rect x="1616" y="213" width="1" height="18" fill="#a0a0a0"/><rect x="1430" y="231" width="372" height="1" fill="#a0a0a0"/><rect x="1430" y="250" width="372" height="1" fill="#a0a0a0"/><rect x="1616" y="251" width="1" height="18" fill="#a0a0a0"/><rect x="1430" y="269" width="372" height="1" fill="#a0a0a0"/><rect x="1430" y="288" width="372" height="1" fill="#a0a0a0"/><rect x="1616" y="289" width="1" height="18" fill="#a0a0a0"/><rect x="1430" y="307" width="372" height="1" fill="#a0a0a0"/><rect x="1430" y="326" width="372" height="1" fill="#a0a0a0"/><rect x="1616" y="327" width="1" height="18" fill="#a0a0a0"/><rect x="1430" y="345" width="372" height="1" fill="#a0a0a0"/><rect x="1616" y="346" width="1" height="18" fill="#a0a0a0"/><rect x="1430" y="364" width="372" height="1" fill="#a0a0a0"/><rect x="1616" y="365" width="1" height="18" fill="#a0a0a0"/><rect x="1430" y="383" width="372" height="1" fill="#a0a0a0"/><rect x="1430" y="402" width="372" height="1" fill="#a0a0a0"/><rect x="1616" y="403" width="1" height="18" fill="#a0a0a0"/><rect x="1430" y="421" width="372" height="1" fill="#a0a0a0"/><rect x="1430" y="440" width="372" height="1" fill="#a0a0a0"/><rect x="1616" y="441" width="1" height="18" fill="#a0a0a0"/><rect x="1430" y="459" width="372" height="1" fill="#a0a0a0"/><rect x="1430" y="478" width="372" height="1" fill="#a0a0a0"/><rect x="1616" y="479" width="1" height="18" fill="#a0a0a0"/><rect x="1430" y="497" width="372" height="1" fill="#a0a0a0"/><rect x="1616" y="498" width="1" height="18" fill="#a0a0a0"/><rect x="1430" y="516" width="372" height="1" fill="#a0a0a0"/><rect x="1616" y="517" width="1" height="18" fill="#a0a0a0"/><rect x="1430" y="535" width="372" height="1" fill="#a0a0a0"/><rect x="1616" y="536" width="1" height="18" fill="#a0a0a0"/><rect x="1430" y="554" width="372" height="1" fill="#a0a0a0"/><rect x="1616" y="555" width="1" height="18" fill="#a0a0a0"/><rect x="1430" y="573" width="372" height="1" fill="#a0a0a0"/><rect x="1430" y="574" width="372" height="18" fill="#ffffff"/><rect x="1430" y="592" width="372" height="1" fill="#a0a0a0"/><rect x="1430" y="611" width="372" height="1" fill="#a0a0a0"/><rect x="1616" y="612" width="1" height="18" fill="#a0a0a0"/><rect x="1430" y="630" width="372" height="1" fill="#a0a0a0"/><rect x="1616" y="631" width="1" height="18" fill="#a0a0a0"/><rect x="1430" y="649" width="372" height="1" fill="#a0a0a0"/><rect x="1616" y="650" width="1" height="18" fill="#a0a0a0"/><rect x="1430" y="668" width="372" height="1" fill="#a0a0a0"/><rect x="1616" y="669" width="1" height="18" fill="#a0a0a0"/><rect x="1430" y="687" width="372" height="1" fill="#a0a0a0"/><rect x="1430" y="22" width="372" height="1" fill="#a0a0a0"/></g><svg x="1430" y="0" width="372" height="1033" overflow="hidden"><g transform="translate(-1430,0)"><text x="1616.5" y="36" font-family="Liberation Sans, sans-serif" font-size="11.5" fill="#ffffff" text-anchor="middle" xml:space="preserve" >Mon 2018-07-09  04:57:47.128  Bar Begin Time</text><text x="1616.5" y="55" font-family="Liberation Sans, sans-serif" font-size="11.5" fill="#000000" text-anchor="middle" xml:space="preserve" >Region 1</text><text x="1616.5" y="74" font-family="Liberation Sans, sans-serif" font-size="11.5" fill="#ffffff" text-anchor="middle" xml:space="preserve" >GCLQ8 [C]  610 Trades  #3 ()</text><text x="1432" y="93" font-family="Liberation Sans, sans-serif" font-size="11.5" fill="#ff0000" text-anchor="start" xml:space="preserve" >Price Chg</text><text x="1617.8" y="93" font-family="Liberation Sans, sans-serif" font-size="11.5" fill="#ff0000" text-anchor="start" xml:space="preserve" >-0.09</text><text x="1432" y="112" font-family="Liberation Sans, sans-serif" font-size="11.5" fill="#ffffff" text-anchor="start" xml:space="preserve" >Open</text><text x="1617.8" y="112" font-family="Liberation Sans, sans-serif" font-size="11.5" fill="#ffffff" text-anchor="start" xml:space="preserve" >73.67</text><text x="1432" y="131" font-family="Liberation Sans, sans-serif" font-size="11.5" fill="#ffffff" text-anchor="start" xml:space="preserve" >High</text><text x="1617.8" y="131" font-family="Liberation Sans, sans-serif" font-size="11.5" fill="#ffffff" text-anchor="start" xml:space="preserve" >73.68</text><text x="1432" y="150" font-family="Liberation Sans, sans-serif" font-size="11.5" fill="#ffffff" text-anchor="start" xml:space="preserve" >Low</text><text x="1617.8" y="150" font-family="Liberation Sans, sans-serif" font-size="11.5" fill="#ffffff" text-anchor="start" xml:space="preserve" >73.59</text><text x="1432" y="169" font-family="Liberation Sans, sans-serif" font-size="11.5" fill="#ffffff" text-anchor="start" xml:space="preserve" >Last</text><text x="1617.8" y="169" font-family="Liberation Sans, sans-serif" font-size="11.5" fill="#ffffff" text-anchor="start" xml:space="preserve" >73.59</text><text x="1432" y="188" font-family="Liberation Sans, sans-serif" font-size="11.5" fill="#ffffff" text-anchor="start" xml:space="preserve" >Volume</text><text x="1617.8" y="188" font-family="Liberation Sans, sans-serif" font-size="11.5" fill="#ffffff" text-anchor="start" xml:space="preserve" >722</text><text x="1616.5" y="207" font-family="Liberation Sans, sans-serif" font-size="11.5" fill="#ffffff" text-anchor="middle" xml:space="preserve" textLength="337" lengthAdjust="spacingAndGlyphs">CountDown Timer (20, 90, No, No, No, No, No, No, No, No, No)</text><text x="1432" y="226" font-family="Liberation Sans, sans-serif" font-size="11.5" fill="#ffffff" text-anchor="start" xml:space="preserve" >CountDown</text><text x="1617.8" y="226" font-family="Liberation Sans, sans-serif" font-size="11.5" fill="#ffffff" text-anchor="start" xml:space="preserve" >0.00</text><text x="1616.5" y="245" font-family="Liberation Sans, sans-serif" font-size="11.5" fill="#ffffff" text-anchor="middle" xml:space="preserve" textLength="209" lengthAdjust="spacingAndGlyphs">Moving Average - Exponential (Last, 21)</text><text x="1432" y="264" font-family="Liberation Sans, sans-serif" font-size="11.5" fill="#a0a0a0" text-anchor="start" xml:space="preserve" >Avg</text><text x="1617.8" y="264" font-family="Liberation Sans, sans-serif" font-size="11.5" fill="#a0a0a0" text-anchor="start" xml:space="preserve" >73.76</text><text x="1616.5" y="283" font-family="Liberation Sans, sans-serif" font-size="11.5" fill="#ffffff" text-anchor="middle" xml:space="preserve" >Moving Average - Simple (Last, 21)</text><text x="1432" y="302" font-family="Liberation Sans, sans-serif" font-size="11.5" fill="#00ff00" text-anchor="start" xml:space="preserve" >Avg</text><text x="1617.8" y="302" font-family="Liberation Sans, sans-serif" font-size="11.5" fill="#00ff00" text-anchor="start" xml:space="preserve" >73.79</text><text x="1616.5" y="321" font-family="Liberation Sans, sans-serif" font-size="11.5" fill="#ffffff" text-anchor="middle" xml:space="preserve" >Bollinger Bands (Last, 14, 2, Smp)</text><text x="1432" y="340" font-family="Liberation Sans, sans-serif" font-size="11.5" fill="#008080" text-anchor="start" xml:space="preserve" >Top Band</text><text x="1617.8" y="340" font-family="Liberation Sans, sans-serif" font-size="11.5" fill="#008080" text-anchor="start" xml:space="preserve" >73.95</text><text x="1432" y="359" font-family="Liberation Sans, sans-serif" font-size="11.5" fill="#c0c0c0" text-anchor="start" xml:space="preserve" >Middle Band</text><text x="1617.8" y="359" font-family="Liberation Sans, sans-serif" font-size="11.5" fill="#c0c0c0" text-anchor="start" xml:space="preserve" >73.80</text><text x="1432" y="378" font-family="Liberation Sans, sans-serif" font-size="11.5" fill="#ff0000" text-anchor="start" xml:space="preserve" >Bottom Band</text><text x="1617.8" y="378" font-family="Liberation Sans, sans-serif" font-size="11.5" fill="#ff0000" text-anchor="start" xml:space="preserve" >73.65</text><text x="1432" y="397" font-family="Liberation Sans, sans-serif" font-size="11.5" fill="#ffffff" text-anchor="start" xml:space="preserve" textLength="368" lengthAdjust="spacingAndGlyphs">UPtrend (2000, No, Use Input Data, 50, High, Number of Ticks, No, No,</text><text x="1432" y="416" font-family="Liberation Sans, sans-serif" font-size="11.5" fill="#400040" text-anchor="start" xml:space="preserve" >Color Bar</text><text x="1617.8" y="416" font-family="Liberation Sans, sans-serif" font-size="11.5" fill="#400040" text-anchor="start" xml:space="preserve" >0.00</text><text x="1432" y="435" font-family="Liberation Sans, sans-serif" font-size="11.5" fill="#ffffff" text-anchor="start" xml:space="preserve" textLength="368" lengthAdjust="spacingAndGlyphs">Dwtrend (2000, No, Use Input Data, 50, Low, Number of Ticks, No, No,</text><text x="1432" y="454" font-family="Liberation Sans, sans-serif" font-size="11.5" fill="#402000" text-anchor="start" xml:space="preserve" >Color Bar</text><text x="1617.8" y="454" font-family="Liberation Sans, sans-serif" font-size="11.5" fill="#402000" text-anchor="start" xml:space="preserve" >0.00</text><text x="1432" y="473" font-family="Liberation Sans, sans-serif" font-size="11.5" fill="#ffffff" text-anchor="start" xml:space="preserve" textLength="373" lengthAdjust="spacingAndGlyphs">Zig Zag (High, Low, 2, 0.5, 0.01, 3, None, No, No, No, Yes, No, None, N</text><text x="1432" y="492" font-family="Liberation Sans, sans-serif" font-size="11.5" fill="#ff0000" text-anchor="start" xml:space="preserve" >Zig Zag</text><text x="1617.8" y="492" font-family="Liberation Sans, sans-serif" font-size="11.5" fill="#ff0000" text-anchor="start" xml:space="preserve" >73.65</text><text x="1432" y="511" font-family="Liberation Sans, sans-serif" font-size="11.5" fill="#00ff00" text-anchor="start" xml:space="preserve" >Text Labels</text><text x="1617.8" y="511" font-family="Liberation Sans, sans-serif" font-size="11.5" fill="#00ff00" text-anchor="start" xml:space="preserve" >0.00</text><text x="1432" y="530" font-family="Liberation Sans, sans-serif" font-size="11.5" fill="#8080ff" text-anchor="start" xml:space="preserve" >Zig Zag Mid-Point</text><text x="1617.8" y="530" font-family="Liberation Sans, sans-serif" font-size="11.5" fill="#8080ff" text-anchor="start" xml:space="preserve" >73.69</text><text x="1432" y="549" font-family="Liberation Sans, sans-serif" font-size="11.5" fill="#8080ff" text-anchor="start" xml:space="preserve" >Extension Lines</text><text x="1617.8" y="549" font-family="Liberation Sans, sans-serif" font-size="11.5" fill="#8080ff" text-anchor="start" xml:space="preserve" >0.00</text><text x="1432" y="568" font-family="Liberation Sans, sans-serif" font-size="11.5" fill="#c00000" text-anchor="start" xml:space="preserve" >Zig Zag Oscillator</text><text x="1617.8" y="568" font-family="Liberation Sans, sans-serif" font-size="11.5" fill="#c00000" text-anchor="start" xml:space="preserve" >-0.30</text><text x="1616.5" y="587" font-family="Liberation Sans, sans-serif" font-size="11.5" fill="#000000" text-anchor="middle" xml:space="preserve" >Region 2</text><text x="1616.5" y="606" font-family="Liberation Sans, sans-serif" font-size="11.5" fill="#ffffff" text-anchor="middle" xml:space="preserve" >Stochastic - Fast (14, 3, 80, 20, Smp, High, Low, Last)</text><text x="1432" y="625" font-family="Liberation Sans, sans-serif" font-size="11.5" fill="#00ff00" text-anchor="start" xml:space="preserve" >%K</text><text x="1617.8" y="625" font-family="Liberation Sans, sans-serif" font-size="11.5" fill="#00ff00" text-anchor="start" xml:space="preserve" >0.00</text><text x="1432" y="644" font-family="Liberation Sans, sans-serif" font-size="11.5" fill="#ff00ff" text-anchor="start" xml:space="preserve" >%D</text><text x="1617.8" y="644" font-family="Liberation Sans, sans-serif" font-size="11.5" fill="#ff00ff" text-anchor="start" xml:space="preserve" >6.06</text><text x="1432" y="663" font-family="Liberation Sans, sans-serif" font-size="11.5" fill="#ffff00" text-anchor="start" xml:space="preserve" >Line1</text><text x="1617.8" y="663" font-family="Liberation Sans, sans-serif" font-size="11.5" fill="#ffff00" text-anchor="start" xml:space="preserve" >80.00</text><text x="1432" y="682" font-family="Liberation Sans, sans-serif" font-size="11.5" fill="#ff8000" text-anchor="start" xml:space="preserve" >Line2</text><text x="1617.8" y="682" font-family="Liberation Sans, sans-serif" font-size="11.5" fill="#ff8000" text-anchor="start" xml:space="preserve" >20.00</text></g></svg>
</svg></body></html>
